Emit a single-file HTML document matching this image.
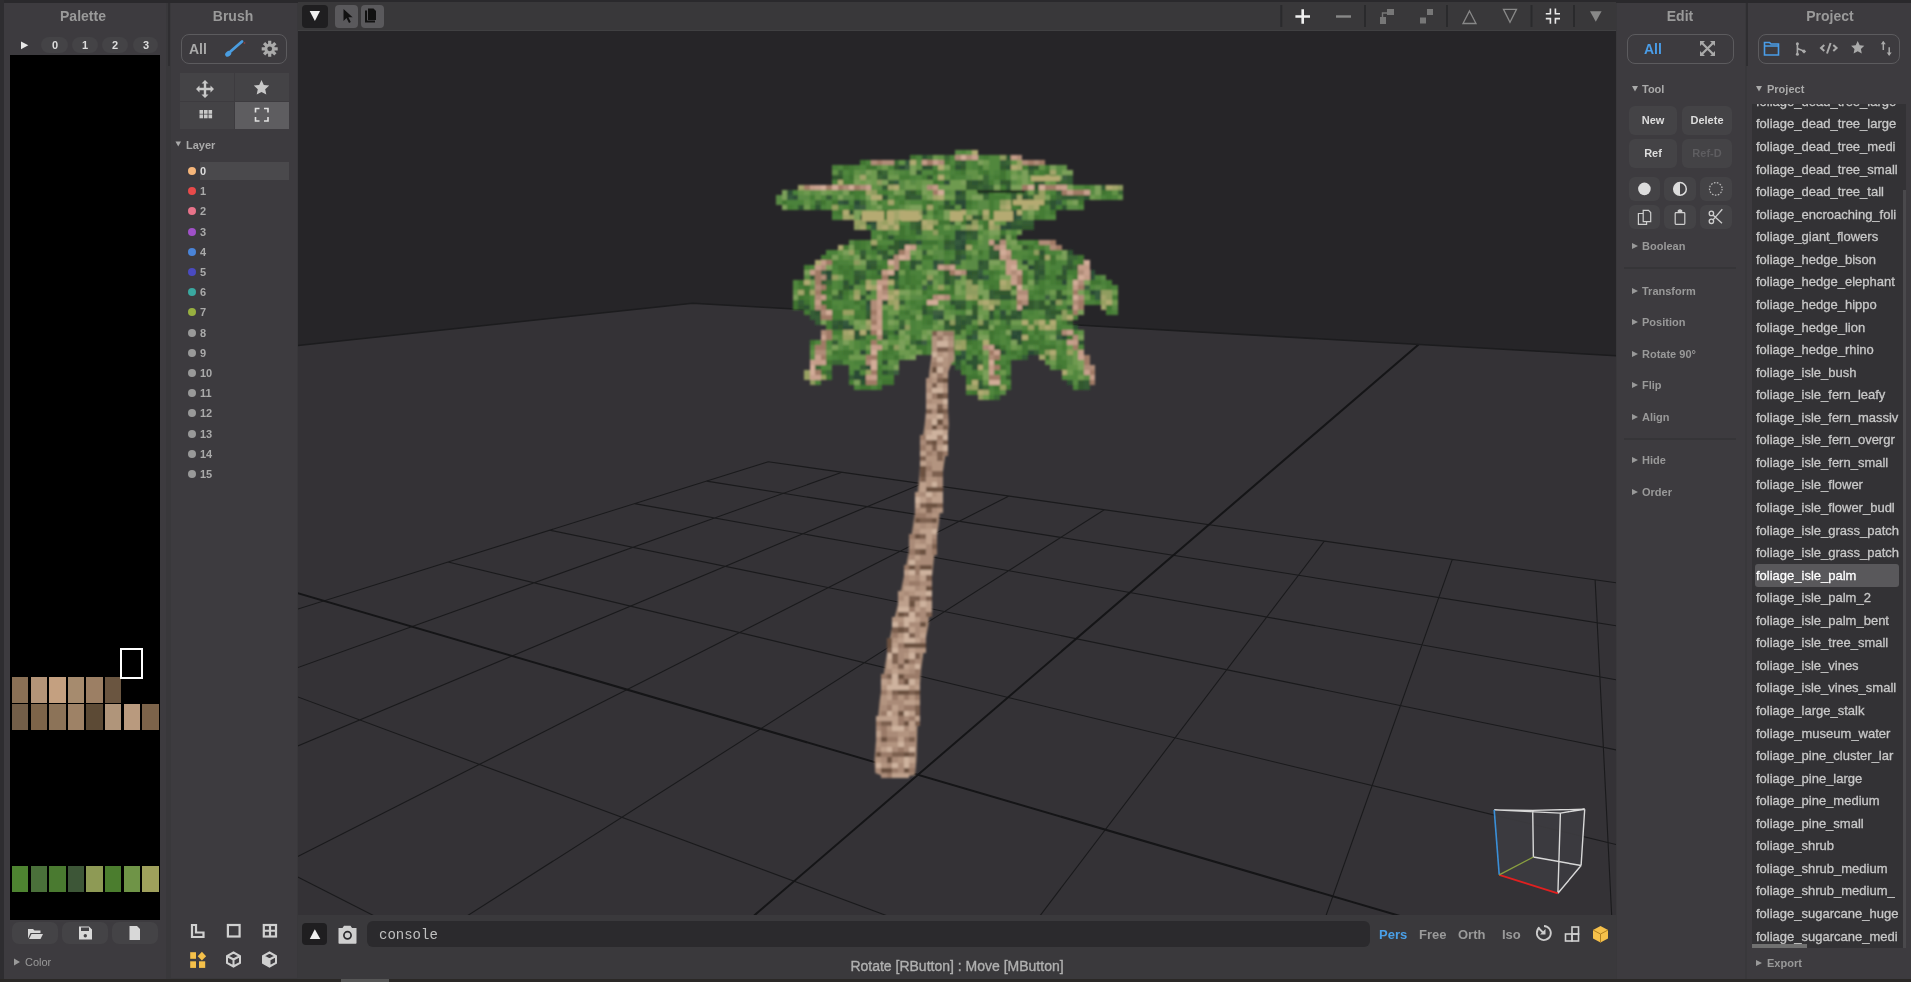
<!DOCTYPE html><html><head><meta charset="utf-8"><style>
html,body{margin:0;padding:0;}
body{width:1911px;height:982px;overflow:hidden;position:relative;background:#39383b;font-family:"Liberation Sans", sans-serif;}
.b{position:absolute;}
.t{position:absolute;white-space:nowrap;-webkit-font-smoothing:antialiased;will-change:transform;}
svg{position:absolute;}
</style></head><body>
<div class="b" style="left:4px;top:3px;width:162px;height:976px;background:#3d3b3f;"></div><div class="b" style="left:171px;top:3px;width:126px;height:975px;background:#3d3b3f;"></div><div class="b" style="left:1617px;top:3px;width:128px;height:976px;background:#3d3b3f;"></div><div class="b" style="left:1747px;top:3px;width:164px;height:976px;background:#3d3b3f;"></div><div class="b" style="left:0px;top:0px;width:1911px;height:3px;background:#2a292c;"></div><div class="b" style="left:0px;top:0px;width:4px;height:982px;background:#2e2d30;"></div><div class="b" style="left:0px;top:979px;width:1911px;height:3px;background:#2a2826;"></div><div class="b" style="left:167.5px;top:3px;width:2.5px;height:63px;background:#2f2e31;"></div><div class="b" style="left:1745.5px;top:3px;width:2.0px;height:63px;background:#2f2e31;"></div><div class="b" style="left:298px;top:2px;width:1318px;height:28px;background:#39383a;"></div><div class="b" style="left:298px;top:30px;width:1318px;height:1px;background:#404042;"></div><div class="b" style="left:298px;top:915px;width:1318px;height:64px;background:#3a393c;"></div><div class="t" style="left:-67px;width:300px;text-align:center;top:2px;height:28px;line-height:28px;font-size:14px;color:#9a9a9a;font-weight:bold;">Palette</div><div class="t" style="left:83px;width:300px;text-align:center;top:2px;height:28px;line-height:28px;font-size:14px;color:#9a9a9a;font-weight:bold;">Brush</div><div class="t" style="left:1530px;width:300px;text-align:center;top:2px;height:28px;line-height:28px;font-size:14px;color:#9a9a9a;font-weight:bold;">Edit</div><div class="t" style="left:1680px;width:300px;text-align:center;top:2px;height:28px;line-height:28px;font-size:14px;color:#9a9a9a;font-weight:bold;">Project</div><svg style="left:0;top:0" width="170" height="60"><polygon points="21,41.4 28.3,45.3 21,49.2" fill="#e8e8e8"/></svg><div class="b" style="left:41.4px;top:37px;width:26.199999999999996px;height:15.5px;background:#444346;border-radius:8px;"></div><div class="t" style="left:-95.5px;width:300px;text-align:center;top:34px;height:22px;line-height:22px;font-size:11px;color:#dddddd;font-weight:bold;">0</div><div class="b" style="left:72px;top:37px;width:25.900000000000006px;height:15.5px;background:#444346;border-radius:8px;"></div><div class="t" style="left:-65.05px;width:300px;text-align:center;top:34px;height:22px;line-height:22px;font-size:11px;color:#dddddd;font-weight:bold;">1</div><div class="b" style="left:102.3px;top:37px;width:25.700000000000003px;height:15.5px;background:#444346;border-radius:8px;"></div><div class="t" style="left:-34.849999999999994px;width:300px;text-align:center;top:34px;height:22px;line-height:22px;font-size:11px;color:#dddddd;font-weight:bold;">2</div><div class="b" style="left:132.6px;top:37px;width:25.80000000000001px;height:15.5px;background:#444346;border-radius:8px;"></div><div class="t" style="left:-4.5px;width:300px;text-align:center;top:34px;height:22px;line-height:22px;font-size:11px;color:#dddddd;font-weight:bold;">3</div><div class="b" style="left:10px;top:55px;width:150px;height:865px;background:#000;"></div><div class="b" style="left:12.0px;top:677.2px;width:16.4px;height:25.59999999999991px;background:#8a7055;"></div><div class="b" style="left:30.6px;top:677.2px;width:16.4px;height:25.59999999999991px;background:#b39478;"></div><div class="b" style="left:49.2px;top:677.2px;width:16.39999999999999px;height:25.59999999999991px;background:#c4a080;"></div><div class="b" style="left:67.8px;top:677.2px;width:16.400000000000006px;height:25.59999999999991px;background:#a68b6e;"></div><div class="b" style="left:86.4px;top:677.2px;width:16.39999999999999px;height:25.59999999999991px;background:#9c7f64;"></div><div class="b" style="left:105.0px;top:677.2px;width:16.400000000000006px;height:25.59999999999991px;background:#6a5540;"></div><div class="b" style="left:12.0px;top:704.2px;width:16.4px;height:25.59999999999991px;background:#735e48;"></div><div class="b" style="left:30.6px;top:704.2px;width:16.4px;height:25.59999999999991px;background:#7d6449;"></div><div class="b" style="left:49.2px;top:704.2px;width:16.39999999999999px;height:25.59999999999991px;background:#8c7358;"></div><div class="b" style="left:67.8px;top:704.2px;width:16.400000000000006px;height:25.59999999999991px;background:#9e8266;"></div><div class="b" style="left:86.4px;top:704.2px;width:16.39999999999999px;height:25.59999999999991px;background:#5c4a35;"></div><div class="b" style="left:105.0px;top:704.2px;width:16.400000000000006px;height:25.59999999999991px;background:#b0957a;"></div><div class="b" style="left:123.6px;top:704.2px;width:16.400000000000006px;height:25.59999999999991px;background:#b99a7e;"></div><div class="b" style="left:142.2px;top:704.2px;width:16.400000000000006px;height:25.59999999999991px;background:#7c634a;"></div><div class="b" style="left:12.0px;top:866.4px;width:16.4px;height:25.600000000000023px;background:#4e8431;"></div><div class="b" style="left:30.6px;top:866.4px;width:16.4px;height:25.600000000000023px;background:#4a703a;"></div><div class="b" style="left:49.2px;top:866.4px;width:16.39999999999999px;height:25.600000000000023px;background:#4a7a30;"></div><div class="b" style="left:67.8px;top:866.4px;width:16.400000000000006px;height:25.600000000000023px;background:#3d5637;"></div><div class="b" style="left:86.4px;top:866.4px;width:16.39999999999999px;height:25.600000000000023px;background:#8e9a55;"></div><div class="b" style="left:105.0px;top:866.4px;width:16.400000000000006px;height:25.600000000000023px;background:#4b7d2e;"></div><div class="b" style="left:123.6px;top:866.4px;width:16.400000000000006px;height:25.600000000000023px;background:#6f9447;"></div><div class="b" style="left:142.2px;top:866.4px;width:16.400000000000006px;height:25.600000000000023px;background:#9fa05c;"></div><div class="b" style="left:120px;top:647.5px;width:22.5px;height:31.0px;background:transparent;border:2.5px solid #fff;box-sizing:border-box;"></div><div class="b" style="left:12px;top:922px;width:46px;height:21.5px;background:#444346;border-radius:7px;"></div><div class="b" style="left:62px;top:922px;width:46px;height:21.5px;background:#444346;border-radius:7px;"></div><div class="b" style="left:112px;top:922px;width:45.5px;height:21.5px;background:#444346;border-radius:7px;"></div><svg style="left:0;top:900px" width="170" height="60">
<path d="M28,29 h5 l1.5,1.5 h6 v2.5 h-10 l-2.5,5.5 z" fill="#d8d8d8"/><path d="M29,39 l2.5,-5 h11.5 l-2.5,5 z" fill="#d8d8d8"/>
<path d="M79,26.5 h10 l3,3 v10 h-13 z M81,27.5 v3.5 h8 v-3.5 z" fill="#d8d8d8" fill-rule="evenodd"/><circle cx="85.3" cy="35.8" r="1.7" fill="#444346"/>
<path d="M129.5,26 h7.5 l3,3 v11 h-10.5 z" fill="#d8d8d8"/>
</svg><svg style="left:0;top:940px" width="60" height="40"><polygon points="14,18.5 20,22 14,25.5" fill="#999"/></svg><div class="t" style="left:25px;top:951px;height:22px;line-height:22px;font-size:11px;color:#999;font-weight:normal;">Color</div><div class="b" style="left:180.5px;top:34px;width:106.5px;height:29.5px;background:transparent;border:1px solid #5c5b5e;border-radius:8px;box-sizing:border-box;"></div><div class="t" style="left:189px;top:34.5px;height:28px;line-height:28px;font-size:14px;color:#aaaaaa;font-weight:bold;">All</div><svg style="left:170px;top:30px" width="130" height="40">
<path d="M60.5,21.5 L72,11.5" stroke="#4a9de0" stroke-width="2.8" stroke-linecap="round"/><ellipse cx="58.2" cy="23.8" rx="3.3" ry="2.5" transform="rotate(-40 58.2 23.8)" fill="#4a9de0"/><circle cx="74.5" cy="13" r="0.9" fill="#8a4040"/>
<g transform="translate(99.7,18.8)" fill="#aaa"><circle r="5.2"/><path d="M-1.6,-8 h3.2 v16 h-3.2z M-8,-1.6 v3.2 h16 v-3.2z" /><path d="M-1.6,-8 h3.2 v16 h-3.2z" transform="rotate(45)"/><path d="M-1.6,-8 h3.2 v16 h-3.2z" transform="rotate(-45)"/><circle r="2.4" fill="#3c3b3e"/></g>
</svg><div class="b" style="left:179.7px;top:73px;width:54.5px;height:27.700000000000003px;background:#444346;"></div><div class="b" style="left:235px;top:73px;width:53.80000000000001px;height:27.700000000000003px;background:#444346;"></div><div class="b" style="left:179.7px;top:101.5px;width:54.5px;height:27.69999999999999px;background:#444346;"></div><div class="b" style="left:235px;top:101.5px;width:53.80000000000001px;height:27.69999999999999px;background:#5e5d60;"></div><svg style="left:170px;top:70px" width="130" height="62">
<g fill="#c8c8c8"><path d="M35,10 l3.5,3.5 h-2.3 v4.3 h4.3 v-2.3 l3.5,3.5 l-3.5,3.5 v-2.3 h-4.3 v4.3 h2.3 l-3.5,3.5 l-3.5,-3.5 h2.3 v-4.3 h-4.3 v2.3 l-3.5,-3.5 l3.5,-3.5 v2.3 h4.3 v-4.3 h-2.3 z"/></g>
<path d="M91.5,10 l2.3,5 5.4,0.6 -4,3.7 1.1,5.3 -4.8,-2.7 -4.8,2.7 1.1,-5.3 -4,-3.7 5.4,-0.6z" fill="#c8c8c8"/>
<g fill="#c8c8c8"><rect x="29.5" y="40" width="3.6" height="3.8"/><rect x="34" y="40" width="3.6" height="3.8"/><rect x="38.5" y="40" width="3.6" height="3.8"/><rect x="29.5" y="44.5" width="3.6" height="3.8"/><rect x="34" y="44.5" width="3.6" height="3.8"/><rect x="38.5" y="44.5" width="3.6" height="3.8"/></g>
<path d="M85.5,42.5 v-4 h4 M94,38.5 h4 v4 M98,47 v4 h-4 M89.5,51 h-4 v-4" stroke="#e0e0e0" stroke-width="1.6" fill="none"/>
</svg><svg style="left:170px;top:135px" width="30" height="20"><polygon points="5.5,6.5 11,6.5 8.25,11.5" fill="#aaa"/></svg><div class="t" style="left:186px;top:134px;height:22px;line-height:22px;font-size:11px;color:#aaaaaa;font-weight:bold;">Layer</div><div class="b" style="left:200px;top:162px;width:88.80000000000001px;height:17.69999999999999px;background:#4a494c;"></div><div class="b" style="left:187.8px;top:167.0px;width:8px;height:8px;border-radius:50%;background:#f5b57a"></div><div class="t" style="left:200px;top:160.0px;height:22px;line-height:22px;font-size:11px;color:#dddddd;font-weight:bold;">0</div><div class="b" style="left:187.8px;top:187.2px;width:8px;height:8px;border-radius:50%;background:#e84a4a"></div><div class="t" style="left:200px;top:180.2px;height:22px;line-height:22px;font-size:11px;color:#aaaaaa;font-weight:bold;">1</div><div class="b" style="left:187.8px;top:207.4px;width:8px;height:8px;border-radius:50%;background:#e8738a"></div><div class="t" style="left:200px;top:200.4px;height:22px;line-height:22px;font-size:11px;color:#aaaaaa;font-weight:bold;">2</div><div class="b" style="left:187.8px;top:227.6px;width:8px;height:8px;border-radius:50%;background:#a050c8"></div><div class="t" style="left:200px;top:220.6px;height:22px;line-height:22px;font-size:11px;color:#aaaaaa;font-weight:bold;">3</div><div class="b" style="left:187.8px;top:247.8px;width:8px;height:8px;border-radius:50%;background:#4a84d8"></div><div class="t" style="left:200px;top:240.8px;height:22px;line-height:22px;font-size:11px;color:#aaaaaa;font-weight:bold;">4</div><div class="b" style="left:187.8px;top:268.0px;width:8px;height:8px;border-radius:50%;background:#4a4ac0"></div><div class="t" style="left:200px;top:261.0px;height:22px;line-height:22px;font-size:11px;color:#aaaaaa;font-weight:bold;">5</div><div class="b" style="left:187.8px;top:288.2px;width:8px;height:8px;border-radius:50%;background:#3aa8a0"></div><div class="t" style="left:200px;top:281.2px;height:22px;line-height:22px;font-size:11px;color:#aaaaaa;font-weight:bold;">6</div><div class="b" style="left:187.8px;top:308.4px;width:8px;height:8px;border-radius:50%;background:#98b040"></div><div class="t" style="left:200px;top:301.4px;height:22px;line-height:22px;font-size:11px;color:#aaaaaa;font-weight:bold;">7</div><div class="b" style="left:187.8px;top:328.6px;width:8px;height:8px;border-radius:50%;background:#999999"></div><div class="t" style="left:200px;top:321.6px;height:22px;line-height:22px;font-size:11px;color:#aaaaaa;font-weight:bold;">8</div><div class="b" style="left:187.8px;top:348.8px;width:8px;height:8px;border-radius:50%;background:#999999"></div><div class="t" style="left:200px;top:341.79999999999995px;height:22px;line-height:22px;font-size:11px;color:#aaaaaa;font-weight:bold;">9</div><div class="b" style="left:187.8px;top:369.0px;width:8px;height:8px;border-radius:50%;background:#999999"></div><div class="t" style="left:200px;top:362.0px;height:22px;line-height:22px;font-size:11px;color:#aaaaaa;font-weight:bold;">10</div><div class="b" style="left:187.8px;top:389.2px;width:8px;height:8px;border-radius:50%;background:#999999"></div><div class="t" style="left:200px;top:382.2px;height:22px;line-height:22px;font-size:11px;color:#aaaaaa;font-weight:bold;">11</div><div class="b" style="left:187.8px;top:409.4px;width:8px;height:8px;border-radius:50%;background:#999999"></div><div class="t" style="left:200px;top:402.4px;height:22px;line-height:22px;font-size:11px;color:#aaaaaa;font-weight:bold;">12</div><div class="b" style="left:187.8px;top:429.6px;width:8px;height:8px;border-radius:50%;background:#999999"></div><div class="t" style="left:200px;top:422.59999999999997px;height:22px;line-height:22px;font-size:11px;color:#aaaaaa;font-weight:bold;">13</div><div class="b" style="left:187.8px;top:449.8px;width:8px;height:8px;border-radius:50%;background:#999999"></div><div class="t" style="left:200px;top:442.8px;height:22px;line-height:22px;font-size:11px;color:#aaaaaa;font-weight:bold;">14</div><div class="b" style="left:187.8px;top:470.0px;width:8px;height:8px;border-radius:50%;background:#999999"></div><div class="t" style="left:200px;top:463.0px;height:22px;line-height:22px;font-size:11px;color:#aaaaaa;font-weight:bold;">15</div><svg style="left:170px;top:910px" width="130" height="70">
<g fill="none" stroke="#d0d0d0" stroke-width="2.2">
<path d="M22,15 h4 v7.5 h7.5 v4.5 h-11.5 z" stroke-linejoin="miter"/>
<rect x="57.9" y="15" width="11.7" height="11.5"/>
<rect x="93.8" y="15" width="12.2" height="11.5"/><path d="M100,15 v11.5 M93.8,20.75 h12.2"/>
</g>
<g fill="#f5c04a"><rect x="20.2" y="42.2" width="5.8" height="6.6"/><rect x="20.2" y="51.3" width="5.8" height="6.6"/><rect x="29" y="51.3" width="6.2" height="6.6"/><path d="M31.9,41.8 l4.2,4.4 -4.2,4.4 -4.2,-4.4z"/></g>
<g fill="none" stroke="#d0d0d0" stroke-width="2"><path d="M63.5,42.5 l6.5,3.5 v7 l-6.5,3.5 -6.5,-3.5 v-7 z M57,46 l6.5,3.5 6.5,-3.5 M63.5,49.5 v7.5"/></g>
<path d="M93,46 l6.5,3.5 v7.5 l-6.5,-3.5z" fill="#d0d0d0"/><g fill="none" stroke="#d0d0d0" stroke-width="2"><path d="M99.5,42.5 l6.5,3.5 v7 l-6.5,3.5 -6.5,-3.5 v-7 z M93,46 l6.5,3.5 6.5,-3.5 M99.5,49.5 v7.5"/></g>
</svg><div class="b" style="left:302.4px;top:5.2px;width:25.30000000000001px;height:22.6px;background:#1f1e20;border-radius:4px;"></div><svg style="left:290px;top:0" width="110" height="32"><polygon points="19.7,11 30,11 24.9,21" fill="#f0f0f0"/></svg><div class="b" style="left:335px;top:5.4px;width:23.19999999999999px;height:22.5px;background:#5a595c;border-radius:4px;"></div><div class="b" style="left:360.8px;top:5.4px;width:23.0px;height:22.5px;background:#5a595c;border-radius:4px;"></div><svg style="left:330px;top:0" width="60" height="32">
<path d="M13.5,9 v12 l3,-3 l2.5,5 l1.8,-0.9 l-2.4,-4.8 h4.2 z" fill="#111"/>
<path d="M35,10.5 h2 v10 h8 v2 h-10z" fill="#111"/><path d="M38,8.5 h5.5 l2.5,2.5 v9 h-8z" fill="#111"/>
</svg><svg style="left:1270px;top:0" width="350" height="32">
<g fill="#3c3c3e"></g>
<g stroke="#2a2a2c" stroke-width="2"><path d="M11.3,5 v22 M95,5 v22 M177,5 v22 M261.5,5 v22 M304,5 v22"/></g>
<path d="M25.4,16.5 h14.6 M32.7,9.2 v14.6" stroke="#f0f0f0" stroke-width="2.6"/>
<path d="M66,16.5 h15" stroke="#888" stroke-width="2.4"/>
<g fill="#777"><rect x="110" y="17" width="6" height="7"/><rect x="117" y="9" width="7" height="6"/><path d="M112.5,17 v-4 h4.5" stroke="#777" fill="none" stroke-width="1.4"/>
<rect x="150" y="17.5" width="6" height="6"/><rect x="157" y="9" width="6" height="6"/></g>
<path d="M199.5,11 l6.5,12.5 h-13 z" stroke="#888" stroke-width="1.3" fill="none"/>
<path d="M233.5,9.3 h13 l-6.5,13 z" stroke="#888" stroke-width="1.3" fill="none"/>
<g stroke="#e8e8e8" stroke-width="1.6" fill="none"><path d="M275.8,13.8 h4.6 v-5.2 M290,13.8 h-4.6 v-5.2 M275.8,18.6 h4.6 v5.2 M290,18.6 h-4.6 v5.2"/></g>
<polygon points="320,11.3 331.6,11.3 325.8,21.7" fill="#888"/>
</svg><div class="b" style="left:302px;top:922.7px;width:25.399999999999977px;height:22.699999999999932px;background:#1f1e20;border-radius:4px;"></div><svg style="left:290px;top:915px" width="80" height="40"><polygon points="24.8,14.2 30.3,24.1 19.8,24.1" fill="#f0f0f0"/><path d="M48.5,13 h4 l1.5,-2.2 h6.5 l1.5,2.2 h4.5 v15 q0,0.8 -0.8,0.8 h-16.4 q-0.8,0 -0.8,-0.8 z" fill="#cfcfcf"/><circle cx="57.5" cy="20.3" r="3.6" fill="none" stroke="#2a292c" stroke-width="1.7"/></svg><div class="b" style="left:367.4px;top:921.4px;width:1002.6px;height:26.100000000000023px;background:#2b2a2d;border-radius:6px;"></div><div class="t" style="left:378.5px;top:921px;height:28px;line-height:28px;font-size:14px;color:#c0c0c0;font-weight:normal;font-family:'Liberation Mono',monospace;">console</div><div class="t" style="left:1379.4px;top:921.5px;height:26px;line-height:26px;font-size:13px;color:#4aa0e8;font-weight:bold;">Pers</div><div class="t" style="left:1419px;top:921.5px;height:26px;line-height:26px;font-size:13px;color:#9a9a9a;font-weight:bold;">Free</div><div class="t" style="left:1457.5px;top:921.5px;height:26px;line-height:26px;font-size:13px;color:#9a9a9a;font-weight:bold;">Orth</div><div class="t" style="left:1502.4px;top:921.5px;height:26px;line-height:26px;font-size:13px;color:#9a9a9a;font-weight:bold;">Iso</div><svg style="left:1530px;top:915px" width="90" height="40">
<path d="M9.5,12.5 A7,7 0 1 0 14,11" stroke="#ccc" stroke-width="1.8" fill="none"/><path d="M8,12.5 l6,6" stroke="#ccc" stroke-width="1.8"/><path d="M15.5,14 v5.5 h-5.5z" fill="#ccc"/>
<g stroke="#d0d0d0" stroke-width="1.6" fill="none"><rect x="35.5" y="19" width="6.5" height="7"/><rect x="42" y="19" width="6.5" height="7"/><rect x="42" y="12" width="6.5" height="7"/></g>
<path d="M70.5,11 l7.5,4 v8.5 l-7.5,4 -7.5,-4 v-8.5z" fill="#f5c04a"/><path d="M63,15 l7.5,4 7.5,-4 M70.5,19 v8.5" stroke="#b08020" stroke-width="1" fill="none"/>
</svg><div class="t" style="left:807.1px;width:300px;text-align:center;top:951.5px;height:28px;line-height:28px;font-size:14px;color:#b0b0b0;font-weight:normal;-webkit-text-stroke:0.35px;">Rotate [RButton] : Move [MButton]</div><div class="b" style="left:340.7px;top:979px;width:48.0px;height:3px;background:#555;"></div><div class="b" style="left:1626.5px;top:33.5px;width:107.70000000000005px;height:30.299999999999997px;background:transparent;border:1px solid #5c5b5e;border-radius:8px;box-sizing:border-box;"></div><div class="t" style="left:1644.4px;top:34.8px;height:28px;line-height:28px;font-size:14px;color:#4a9de8;font-weight:bold;">All</div><svg style="left:1690px;top:30px" width="40" height="40">
<g stroke="#aaa" stroke-width="2.2" fill="none"><path d="M12,13 L23,24 M23,13 L12,24"/></g>
<g fill="#aaa"><path d="M10,11 h5 l-5,5z M25,11 v5 l-5,-5z M10,26 v-5 l5,5z M25,26 h-5 l5,-5z"/></g>
</svg><div class="b" style="left:1757.6px;top:33.5px;width:142.9000000000001px;height:30.299999999999997px;background:transparent;border:1px solid #5c5b5e;border-radius:8px;box-sizing:border-box;"></div><svg style="left:1750px;top:30px" width="160" height="40">
<path d="M14.5,12.5 h5 l1.5,1.5 h7.5 v11 h-14 z M14.5,16 h14" stroke="#4a9de8" stroke-width="1.6" fill="none"/>
<g stroke="#aaa" stroke-width="1.6" fill="none"><path d="M47.4,13.5 v11 M47.4,17.5 c0,2.5 5,2 6.5,4"/></g><g fill="#aaa"><circle cx="47.4" cy="13.8" r="1.5"/><circle cx="47.4" cy="24.2" r="1.5"/><path d="M54,19.2 l2.2,2.2 -2.2,2.2 -2.2,-2.2z"/></g>
<g stroke="#aaa" stroke-width="2" fill="none"><path d="M74.3,15 l-3.3,3 3.3,3 M83.3,15 l3.3,3 -3.3,3 M80.6,13 l-3.6,10.5"/></g>
<path d="M107.7,11 l2,4.3 4.6,0.5 -3.4,3.2 0.9,4.5 -4.1,-2.3 -4.1,2.3 0.9,-4.5 -3.4,-3.2 4.6,-0.5z" fill="#aaa"/>
<g stroke="#aaa" stroke-width="1.5" fill="none"><path d="M133.3,20 v-8.4"/><path d="M139.2,17.3 v8"/></g><g fill="#aaa"><path d="M130.8,14.2 l2.5,-3.2 2.5,3.2z M136.7,22.6 h5 l-2.5,3.2z"/></g>
</svg><svg style="left:1631px;top:82.5px" width="10" height="12"><polygon points="1,3 7,3 4,8.5" fill="#aaa"/></svg><div class="t" style="left:1642.4px;top:77.5px;height:22px;line-height:22px;font-size:11px;color:#aaaaaa;font-weight:bold;">Tool</div><div class="b" style="left:1628.7px;top:105.8px;width:48.59999999999991px;height:28.89999999999999px;background:#444346;border-radius:6px;"></div><div class="t" style="left:1503.0px;width:300px;text-align:center;top:109.25px;height:22px;line-height:22px;font-size:11px;color:#dddddd;font-weight:bold;">New</div><div class="b" style="left:1682px;top:105.8px;width:49.5px;height:28.89999999999999px;background:#444346;border-radius:6px;"></div><div class="t" style="left:1556.75px;width:300px;text-align:center;top:109.25px;height:22px;line-height:22px;font-size:11px;color:#dddddd;font-weight:bold;">Delete</div><div class="b" style="left:1628.7px;top:138.8px;width:48.59999999999991px;height:28.899999999999977px;background:#444346;border-radius:6px;"></div><div class="t" style="left:1503.0px;width:300px;text-align:center;top:142.25px;height:22px;line-height:22px;font-size:11px;color:#dddddd;font-weight:bold;">Ref</div><div class="b" style="left:1682px;top:138.8px;width:49.5px;height:28.899999999999977px;background:#444346;border-radius:6px;"></div><div class="t" style="left:1556.75px;width:300px;text-align:center;top:142.25px;height:22px;line-height:22px;font-size:11px;color:#5e5d60;font-weight:bold;">Ref-D</div><div class="b" style="left:1628.7px;top:177.3px;width:31.299999999999955px;height:23.399999999999977px;background:#444346;border-radius:6px;"></div><div class="b" style="left:1664px;top:177.3px;width:31.799999999999955px;height:23.399999999999977px;background:#444346;border-radius:6px;"></div><div class="b" style="left:1700px;top:177.3px;width:31.5px;height:23.399999999999977px;background:#444346;border-radius:6px;"></div><div class="b" style="left:1628.7px;top:204.8px;width:31.299999999999955px;height:23.899999999999977px;background:#444346;border-radius:6px;"></div><div class="b" style="left:1664px;top:204.8px;width:31.799999999999955px;height:23.899999999999977px;background:#444346;border-radius:6px;"></div><div class="b" style="left:1700px;top:204.8px;width:31.5px;height:23.899999999999977px;background:#444346;border-radius:6px;"></div><svg style="left:1620px;top:170px" width="120" height="65">
<circle cx="24.4" cy="18.9" r="6.3" fill="#dcdcdc"/>
<circle cx="60" cy="18.9" r="6.3" fill="none" stroke="#dcdcdc" stroke-width="1.5"/><path d="M60,12.6 a6.3,6.3 0 0 0 0,12.6z" fill="#dcdcdc"/>
<circle cx="95.8" cy="18.9" r="6.3" fill="none" stroke="#bbb" stroke-width="1.2" stroke-dasharray="1.6,1.4"/>
<g stroke="#cfcfcf" stroke-width="1.2" fill="none"><path d="M23.2,43.5 h-4.8 v10.8 h8.2 v-2.5"/><path d="M23.2,40.3 h5.3 l2.2,2.2 v9.2 h-7.5z"/></g>
<g stroke="#cfcfcf" stroke-width="1.2" fill="none"><rect x="55.2" y="42.6" width="9.6" height="11.7" rx="0.8"/><path d="M58.3,42.2 v-1.5 q1.7,-1.6 3.4,0 v1.5z" fill="#cfcfcf"/></g>
<g stroke="#cfcfcf" stroke-width="1.3" fill="none"><circle cx="91.4" cy="43.4" r="2.2"/><circle cx="91.4" cy="51.3" r="2.2"/><path d="M93.2,45.2 L102,53.2 M93.2,49.6 L102.3,39.3"/></g>
</svg><svg style="left:1631px;top:240.2px" width="10" height="12"><polygon points="1,3 7,6 1,9" fill="#999"/></svg><div class="t" style="left:1642.4px;top:235.2px;height:22px;line-height:22px;font-size:11px;color:#999999;font-weight:bold;">Boolean</div><svg style="left:1631px;top:284.6px" width="10" height="12"><polygon points="1,3 7,6 1,9" fill="#999"/></svg><div class="t" style="left:1642.4px;top:279.6px;height:22px;line-height:22px;font-size:11px;color:#999999;font-weight:bold;">Transform</div><svg style="left:1631px;top:316.2px" width="10" height="12"><polygon points="1,3 7,6 1,9" fill="#999"/></svg><div class="t" style="left:1642.4px;top:311.2px;height:22px;line-height:22px;font-size:11px;color:#999999;font-weight:bold;">Position</div><svg style="left:1631px;top:347.5px" width="10" height="12"><polygon points="1,3 7,6 1,9" fill="#999"/></svg><div class="t" style="left:1642.4px;top:342.5px;height:22px;line-height:22px;font-size:11px;color:#999999;font-weight:bold;">Rotate 90°</div><svg style="left:1631px;top:379px" width="10" height="12"><polygon points="1,3 7,6 1,9" fill="#999"/></svg><div class="t" style="left:1642.4px;top:374px;height:22px;line-height:22px;font-size:11px;color:#999999;font-weight:bold;">Flip</div><svg style="left:1631px;top:410.7px" width="10" height="12"><polygon points="1,3 7,6 1,9" fill="#999"/></svg><div class="t" style="left:1642.4px;top:405.7px;height:22px;line-height:22px;font-size:11px;color:#999999;font-weight:bold;">Align</div><svg style="left:1631px;top:454.4px" width="10" height="12"><polygon points="1,3 7,6 1,9" fill="#999"/></svg><div class="t" style="left:1642.4px;top:449.4px;height:22px;line-height:22px;font-size:11px;color:#999999;font-weight:bold;">Hide</div><svg style="left:1631px;top:486px" width="10" height="12"><polygon points="1,3 7,6 1,9" fill="#999"/></svg><div class="t" style="left:1642.4px;top:481px;height:22px;line-height:22px;font-size:11px;color:#999999;font-weight:bold;">Order</div><div class="b" style="left:1624px;top:267px;width:112.40000000000009px;height:2px;background:#363538;"></div><div class="b" style="left:1624px;top:437.5px;width:112.40000000000009px;height:2.0px;background:#363538;"></div><svg style="left:1755px;top:82.5px" width="10" height="12"><polygon points="1,3 7,3 4,8.5" fill="#aaa"/></svg><div class="t" style="left:1766.7px;top:77.5px;height:22px;line-height:22px;font-size:11px;color:#aaaaaa;font-weight:bold;">Project</div><div class="b" style="left:1751.6px;top:103.8px;width:154.70000000000005px;height:844.2px;background:#333235;"></div><div class="b" style="left:1751.6px;top:103.8px;width:147px;height:844px;overflow:hidden"><div class="t" style="left:4.100000000000136px;top:-14.855999999999995px;height:26px;line-height:26px;font-size:13px;color:#c8c8c8;font-weight:normal;-webkit-text-stroke:0.3px;">foliage_dead_tree_large</div><div class="t" style="left:4.100000000000136px;top:7.700000000000003px;height:26px;line-height:26px;font-size:13px;color:#c8c8c8;font-weight:normal;-webkit-text-stroke:0.3px;">foliage_dead_tree_large</div><div class="t" style="left:4.100000000000136px;top:30.256000000000014px;height:26px;line-height:26px;font-size:13px;color:#c8c8c8;font-weight:normal;-webkit-text-stroke:0.3px;">foliage_dead_tree_medi</div><div class="t" style="left:4.100000000000136px;top:52.812px;height:26px;line-height:26px;font-size:13px;color:#c8c8c8;font-weight:normal;-webkit-text-stroke:0.3px;">foliage_dead_tree_small</div><div class="t" style="left:4.100000000000136px;top:75.36800000000001px;height:26px;line-height:26px;font-size:13px;color:#c8c8c8;font-weight:normal;-webkit-text-stroke:0.3px;">foliage_dead_tree_tall</div><div class="t" style="left:4.100000000000136px;top:97.92399999999999px;height:26px;line-height:26px;font-size:13px;color:#c8c8c8;font-weight:normal;-webkit-text-stroke:0.3px;">foliage_encroaching_foli</div><div class="t" style="left:4.100000000000136px;top:120.48000000000002px;height:26px;line-height:26px;font-size:13px;color:#c8c8c8;font-weight:normal;-webkit-text-stroke:0.3px;">foliage_giant_flowers</div><div class="t" style="left:4.100000000000136px;top:143.036px;height:26px;line-height:26px;font-size:13px;color:#c8c8c8;font-weight:normal;-webkit-text-stroke:0.3px;">foliage_hedge_bison</div><div class="t" style="left:4.100000000000136px;top:165.59199999999998px;height:26px;line-height:26px;font-size:13px;color:#c8c8c8;font-weight:normal;-webkit-text-stroke:0.3px;">foliage_hedge_elephant</div><div class="t" style="left:4.100000000000136px;top:188.14799999999997px;height:26px;line-height:26px;font-size:13px;color:#c8c8c8;font-weight:normal;-webkit-text-stroke:0.3px;">foliage_hedge_hippo</div><div class="t" style="left:4.100000000000136px;top:210.704px;height:26px;line-height:26px;font-size:13px;color:#c8c8c8;font-weight:normal;-webkit-text-stroke:0.3px;">foliage_hedge_lion</div><div class="t" style="left:4.100000000000136px;top:233.26px;height:26px;line-height:26px;font-size:13px;color:#c8c8c8;font-weight:normal;-webkit-text-stroke:0.3px;">foliage_hedge_rhino</div><div class="t" style="left:4.100000000000136px;top:255.81599999999997px;height:26px;line-height:26px;font-size:13px;color:#c8c8c8;font-weight:normal;-webkit-text-stroke:0.3px;">foliage_isle_bush</div><div class="t" style="left:4.100000000000136px;top:278.372px;height:26px;line-height:26px;font-size:13px;color:#c8c8c8;font-weight:normal;-webkit-text-stroke:0.3px;">foliage_isle_fern_leafy</div><div class="t" style="left:4.100000000000136px;top:300.928px;height:26px;line-height:26px;font-size:13px;color:#c8c8c8;font-weight:normal;-webkit-text-stroke:0.3px;">foliage_isle_fern_massiv</div><div class="t" style="left:4.100000000000136px;top:323.484px;height:26px;line-height:26px;font-size:13px;color:#c8c8c8;font-weight:normal;-webkit-text-stroke:0.3px;">foliage_isle_fern_overgr</div><div class="t" style="left:4.100000000000136px;top:346.04px;height:26px;line-height:26px;font-size:13px;color:#c8c8c8;font-weight:normal;-webkit-text-stroke:0.3px;">foliage_isle_fern_small</div><div class="t" style="left:4.100000000000136px;top:368.596px;height:26px;line-height:26px;font-size:13px;color:#c8c8c8;font-weight:normal;-webkit-text-stroke:0.3px;">foliage_isle_flower</div><div class="t" style="left:4.100000000000136px;top:391.152px;height:26px;line-height:26px;font-size:13px;color:#c8c8c8;font-weight:normal;-webkit-text-stroke:0.3px;">foliage_isle_flower_budl</div><div class="t" style="left:4.100000000000136px;top:413.708px;height:26px;line-height:26px;font-size:13px;color:#c8c8c8;font-weight:normal;-webkit-text-stroke:0.3px;">foliage_isle_grass_patch</div><div class="t" style="left:4.100000000000136px;top:436.26400000000007px;height:26px;line-height:26px;font-size:13px;color:#c8c8c8;font-weight:normal;-webkit-text-stroke:0.3px;">foliage_isle_grass_patch</div><div class="b" style="left:3.800000000000182px;top:460.11999999999995px;width:143.29999999999995px;height:23.0px;background:#59585b;border-radius:3px;"></div><div class="t" style="left:4.100000000000136px;top:458.82px;height:26px;line-height:26px;font-size:13px;color:#ffffff;font-weight:normal;-webkit-text-stroke:0.3px;">foliage_isle_palm</div><div class="t" style="left:4.100000000000136px;top:481.37600000000003px;height:26px;line-height:26px;font-size:13px;color:#c8c8c8;font-weight:normal;-webkit-text-stroke:0.3px;">foliage_isle_palm_2</div><div class="t" style="left:4.100000000000136px;top:503.932px;height:26px;line-height:26px;font-size:13px;color:#c8c8c8;font-weight:normal;-webkit-text-stroke:0.3px;">foliage_isle_palm_bent</div><div class="t" style="left:4.100000000000136px;top:526.488px;height:26px;line-height:26px;font-size:13px;color:#c8c8c8;font-weight:normal;-webkit-text-stroke:0.3px;">foliage_isle_tree_small</div><div class="t" style="left:4.100000000000136px;top:549.0440000000001px;height:26px;line-height:26px;font-size:13px;color:#c8c8c8;font-weight:normal;-webkit-text-stroke:0.3px;">foliage_isle_vines</div><div class="t" style="left:4.100000000000136px;top:571.6px;height:26px;line-height:26px;font-size:13px;color:#c8c8c8;font-weight:normal;-webkit-text-stroke:0.3px;">foliage_isle_vines_small</div><div class="t" style="left:4.100000000000136px;top:594.1560000000001px;height:26px;line-height:26px;font-size:13px;color:#c8c8c8;font-weight:normal;-webkit-text-stroke:0.3px;">foliage_large_stalk</div><div class="t" style="left:4.100000000000136px;top:616.7120000000001px;height:26px;line-height:26px;font-size:13px;color:#c8c8c8;font-weight:normal;-webkit-text-stroke:0.3px;">foliage_museum_water</div><div class="t" style="left:4.100000000000136px;top:639.268px;height:26px;line-height:26px;font-size:13px;color:#c8c8c8;font-weight:normal;-webkit-text-stroke:0.3px;">foliage_pine_cluster_lar</div><div class="t" style="left:4.100000000000136px;top:661.8240000000001px;height:26px;line-height:26px;font-size:13px;color:#c8c8c8;font-weight:normal;-webkit-text-stroke:0.3px;">foliage_pine_large</div><div class="t" style="left:4.100000000000136px;top:684.3800000000001px;height:26px;line-height:26px;font-size:13px;color:#c8c8c8;font-weight:normal;-webkit-text-stroke:0.3px;">foliage_pine_medium</div><div class="t" style="left:4.100000000000136px;top:706.936px;height:26px;line-height:26px;font-size:13px;color:#c8c8c8;font-weight:normal;-webkit-text-stroke:0.3px;">foliage_pine_small</div><div class="t" style="left:4.100000000000136px;top:729.4920000000001px;height:26px;line-height:26px;font-size:13px;color:#c8c8c8;font-weight:normal;-webkit-text-stroke:0.3px;">foliage_shrub</div><div class="t" style="left:4.100000000000136px;top:752.0480000000001px;height:26px;line-height:26px;font-size:13px;color:#c8c8c8;font-weight:normal;-webkit-text-stroke:0.3px;">foliage_shrub_medium</div><div class="t" style="left:4.100000000000136px;top:774.604px;height:26px;line-height:26px;font-size:13px;color:#c8c8c8;font-weight:normal;-webkit-text-stroke:0.3px;">foliage_shrub_medium_</div><div class="t" style="left:4.100000000000136px;top:797.1600000000001px;height:26px;line-height:26px;font-size:13px;color:#c8c8c8;font-weight:normal;-webkit-text-stroke:0.3px;">foliage_sugarcane_huge</div><div class="t" style="left:4.100000000000136px;top:819.7160000000001px;height:26px;line-height:26px;font-size:13px;color:#c8c8c8;font-weight:normal;-webkit-text-stroke:0.3px;">foliage_sugarcane_medi</div></div><div class="b" style="left:1902.7px;top:190px;width:3.599999999999909px;height:758px;background:#4a494c;"></div><div class="b" style="left:1751.6px;top:944px;width:55.90000000000009px;height:3.5px;background:#707070;"></div><svg style="left:1755px;top:957px" width="10" height="12"><polygon points="1,3 7,6 1,9" fill="#999"/></svg><div class="t" style="left:1766.6px;top:952px;height:22px;line-height:22px;font-size:11px;color:#999999;font-weight:bold;">Export</div><svg style="left:298px;top:31px" width="1318" height="884" viewBox="298 31 1318 884"><rect x="298" y="31" width="1318" height="884" fill="#262528"/><polygon points="-10163.4,1466.4 692.5,303.2 21782.8,1501.5" fill="#343236"/><path d="M768.3,461.7 L-1203.0,1079.3 M768.3,461.7 L1936.5,628.6 M841.9,472.3 L-1230.9,1216.3 M706.6,481.1 L1984.2,684.3 M921.9,483.7 L-1269.1,1404.4 M634.7,503.6 L2046.5,757.0 M1009.0,496.1 L-926.4,1476.5 M549.8,530.2 L2131.2,856.1 M1104.3,509.7 L-413.2,1477.1 M448.1,562.0 L2253.4,998.7 M1324.3,541.2 L613.1,1478.2 M169.5,649.3 L2406.9,1480.2 M1452.3,559.4 L1126.3,1478.8 M-28.7,711.4 L1484.2,1479.2 M1595.1,579.8 L1639.5,1479.3 M-291.8,793.8 L561.6,1478.2 M1755.4,602.7 L2152.6,1479.9 M-658.1,908.6 L-361.1,1477.1 M1936.5,628.6 L2665.8,1480.5 M-1203.0,1079.3 L-1283.7,1476.1 " stroke="#1a1a1c" stroke-width="1.1" fill="none"/><path d="M1418.6,344.5 L100.0,1477.7 M-321.3,411.8 L3329.6,1481.2 " stroke="#151517" stroke-width="2" fill="none"/><path d="M692.5,303.2 L21782.8,1501.5 M692.5,303.2 L-10163.4,1466.4 " stroke="#1c1c1e" stroke-width="1.5" fill="none"/><defs><filter id="bl" x="-5%" y="-5%" width="110%" height="110%"><feGaussianBlur stdDeviation="0.9"/></filter></defs><g filter="url(#bl)"><path fill="#5a8b44" d="M955 150h6v5h-6zM961 155h5v5h-5zM882 160h6v5h-6zM916 160h6v5h-6zM877 165h5v5h-5zM1056 165h6v5h-6zM860 170h6v5h-6zM894 170h5v5h-5zM938 170h6v5h-6zM1017 170h5v5h-5zM1056 170h6v5h-6zM966 175h6v5h-6zM1028 175h6v5h-6zM899 180h6v5h-6zM910 180h6v5h-6zM994 180h6v5h-6zM1011 180h6v5h-6zM877 185h5v5h-5zM899 185h6v5h-6zM810 190h5v5h-5zM838 190h5v5h-5zM944 190h6v5h-6zM1090 190h5v5h-5zM776 195h6v5h-6zM798 195h6v5h-6zM804 195h6v5h-6zM843 195h6v5h-6zM849 195h5v5h-5zM888 195h6v5h-6zM776 200h6v5h-6zM866 200h5v5h-5zM905 200h5v5h-5zM938 200h6v5h-6zM978 200h5v5h-5zM983 200h6v5h-6zM1017 200h5v5h-5zM866 205h5v5h-5zM899 205h6v5h-6zM978 205h5v5h-5zM983 205h6v5h-6zM1067 205h6v5h-6zM1073 205h5v5h-5zM1000 210h6v5h-6zM1022 210h6v5h-6zM922 215h5v5h-5zM1022 215h6v5h-6zM950 225h5v5h-5zM888 230h6v5h-6zM922 235h5v5h-5zM938 235h6v5h-6zM983 235h6v5h-6zM849 240h5v5h-5zM983 240h6v5h-6zM916 245h6v5h-6zM978 245h5v5h-5zM983 245h6v5h-6zM1006 245h5v5h-5zM1045 245h5v5h-5zM888 250h6v5h-6zM933 250h5v5h-5zM938 250h6v5h-6zM966 250h6v5h-6zM849 255h5v5h-5zM938 255h6v5h-6zM972 255h6v5h-6zM966 260h6v5h-6zM972 260h6v5h-6zM1000 260h6v5h-6zM1028 260h6v5h-6zM966 265h6v5h-6zM972 265h6v5h-6zM1006 270h5v5h-5zM804 275h6v5h-6zM933 275h5v5h-5zM938 275h6v5h-6zM1078 275h6v5h-6zM1101 275h5v5h-5zM938 280h6v5h-6zM810 285h5v5h-5zM860 285h6v5h-6zM882 285h6v5h-6zM961 285h5v5h-5zM1095 285h6v5h-6zM860 290h6v5h-6zM871 290h6v5h-6zM1045 290h5v5h-5zM877 295h5v5h-5zM899 295h6v5h-6zM910 295h6v5h-6zM916 295h6v5h-6zM1050 295h6v5h-6zM1073 295h5v5h-5zM933 300h5v5h-5zM944 300h6v5h-6zM1017 300h5v5h-5zM1062 300h5v5h-5zM1078 300h6v5h-6zM821 305h5v5h-5zM905 305h5v5h-5zM933 305h5v5h-5zM1011 305h6v5h-6zM1112 305h6v5h-6zM910 310h6v5h-6zM950 310h5v5h-5zM1006 310h5v5h-5zM1039 310h6v5h-6zM888 315h6v5h-6zM849 320h5v5h-5zM933 320h5v5h-5zM989 320h5v5h-5zM894 325h5v5h-5zM1011 325h6v5h-6zM1017 325h5v5h-5zM905 330h5v5h-5zM1045 330h5v5h-5zM1050 330h6v5h-6zM961 335h5v5h-5zM838 340h5v5h-5zM933 340h5v5h-5zM1056 340h6v5h-6zM826 345h6v5h-6zM838 345h5v5h-5zM1028 345h6v5h-6zM810 355h5v5h-5zM899 355h6v5h-6zM983 355h6v5h-6zM1067 355h6v5h-6zM1084 355h6v5h-6zM894 360h5v5h-5zM1067 360h6v5h-6zM1084 360h6v5h-6zM888 365h6v5h-6zM983 365h6v5h-6zM1050 365h6v5h-6zM1078 370h6v5h-6zM1084 375h6v5h-6zM1073 380h5v5h-5zM1090 380h5v5h-5zM1000 390h6v5h-6z"/><path fill="#51873e" d="M961 150h5v5h-5zM989 155h5v5h-5zM994 155h6v5h-6zM922 160h5v5h-5zM950 160h5v5h-5zM966 160h6v5h-6zM989 160h5v5h-5zM994 160h6v5h-6zM1039 160h6v5h-6zM838 165h5v5h-5zM860 165h6v5h-6zM966 165h6v5h-6zM989 165h5v5h-5zM994 165h6v5h-6zM843 170h6v5h-6zM899 170h6v5h-6zM922 170h5v5h-5zM927 170h6v5h-6zM944 170h6v5h-6zM989 170h5v5h-5zM1006 170h5v5h-5zM1034 170h5v5h-5zM916 175h6v5h-6zM933 175h5v5h-5zM1006 175h5v5h-5zM1034 175h5v5h-5zM826 185h6v5h-6zM849 185h5v5h-5zM1073 185h5v5h-5zM1078 185h6v5h-6zM1090 185h5v5h-5zM888 190h6v5h-6zM994 190h6v5h-6zM1017 190h5v5h-5zM1045 190h5v5h-5zM821 195h5v5h-5zM832 195h6v5h-6zM860 195h6v5h-6zM1006 195h5v5h-5zM810 200h5v5h-5zM826 200h6v5h-6zM882 200h6v5h-6zM894 200h5v5h-5zM910 200h6v5h-6zM916 200h6v5h-6zM933 200h5v5h-5zM994 200h6v5h-6zM826 205h6v5h-6zM838 205h5v5h-5zM933 205h5v5h-5zM972 205h6v5h-6zM994 205h6v5h-6zM1045 205h5v5h-5zM1078 205h6v5h-6zM1034 210h5v5h-5zM938 215h6v5h-6zM961 215h5v5h-5zM1045 215h5v5h-5zM1050 215h6v5h-6zM899 220h6v5h-6zM905 220h5v5h-5zM955 225h6v5h-6zM978 230h5v5h-5zM1011 230h6v5h-6zM916 235h6v5h-6zM877 240h5v5h-5zM882 240h6v5h-6zM888 240h6v5h-6zM1022 240h6v5h-6zM1028 240h6v5h-6zM1039 240h6v5h-6zM866 245h5v5h-5zM972 245h6v5h-6zM1034 245h5v5h-5zM854 250h6v5h-6zM983 250h6v5h-6zM1017 250h5v5h-5zM1022 250h6v5h-6zM1056 250h6v5h-6zM838 255h5v5h-5zM871 255h6v5h-6zM910 255h6v5h-6zM933 255h5v5h-5zM950 255h5v5h-5zM983 255h6v5h-6zM1006 255h5v5h-5zM1011 255h6v5h-6zM1017 255h5v5h-5zM849 260h5v5h-5zM905 260h5v5h-5zM922 260h5v5h-5zM927 260h6v5h-6zM1045 260h5v5h-5zM1062 260h5v5h-5zM810 265h5v5h-5zM815 265h6v5h-6zM927 265h6v5h-6zM955 265h6v5h-6zM1006 265h5v5h-5zM1045 265h5v5h-5zM832 270h6v5h-6zM950 270h5v5h-5zM1000 270h6v5h-6zM1045 270h5v5h-5zM1056 270h6v5h-6zM994 275h6v5h-6zM1028 275h6v5h-6zM1067 275h6v5h-6zM793 280h5v5h-5zM832 280h6v5h-6zM1045 280h5v5h-5zM793 285h5v5h-5zM832 285h6v5h-6zM905 285h5v5h-5zM916 285h6v5h-6zM983 285h6v5h-6zM1017 285h5v5h-5zM1034 285h5v5h-5zM1078 285h6v5h-6zM1090 285h5v5h-5zM1101 285h5v5h-5zM849 290h5v5h-5zM1084 290h6v5h-6zM810 295h5v5h-5zM826 295h6v5h-6zM922 295h5v5h-5zM933 295h5v5h-5zM938 295h6v5h-6zM950 295h5v5h-5zM1034 295h5v5h-5zM1067 295h6v5h-6zM810 300h5v5h-5zM815 300h6v5h-6zM832 300h6v5h-6zM838 300h5v5h-5zM905 300h5v5h-5zM1000 300h6v5h-6zM1006 300h5v5h-5zM838 305h5v5h-5zM854 305h6v5h-6zM955 310h6v5h-6zM1022 310h6v5h-6zM1034 310h5v5h-5zM1067 310h6v5h-6zM1028 315h6v5h-6zM1034 315h5v5h-5zM882 320h6v5h-6zM916 320h6v5h-6zM1045 320h5v5h-5zM1056 320h6v5h-6zM882 325h6v5h-6zM916 325h6v5h-6zM1022 325h6v5h-6zM1062 325h5v5h-5zM1067 325h6v5h-6zM944 330h6v5h-6zM950 330h5v5h-5zM1028 330h6v5h-6zM838 335h5v5h-5zM866 335h5v5h-5zM871 335h6v5h-6zM888 335h6v5h-6zM916 335h6v5h-6zM950 335h5v5h-5zM1000 335h6v5h-6zM1034 335h5v5h-5zM815 340h6v5h-6zM826 340h6v5h-6zM854 340h6v5h-6zM950 340h5v5h-5zM1000 340h6v5h-6zM1045 340h5v5h-5zM810 345h5v5h-5zM854 345h6v5h-6zM966 345h6v5h-6zM978 345h5v5h-5zM983 345h6v5h-6zM1006 345h5v5h-5zM1034 345h5v5h-5zM1056 345h6v5h-6zM1078 345h6v5h-6zM877 350h5v5h-5zM944 350h6v5h-6zM972 350h6v5h-6zM1056 350h6v5h-6zM826 355h6v5h-6zM877 355h5v5h-5zM966 355h6v5h-6zM1000 355h6v5h-6zM1062 355h5v5h-5zM843 360h6v5h-6zM849 360h5v5h-5zM877 360h5v5h-5zM821 365h5v5h-5zM826 365h6v5h-6zM849 365h5v5h-5zM854 365h6v5h-6zM882 365h6v5h-6zM994 365h6v5h-6zM860 370h6v5h-6zM1073 370h5v5h-5zM1090 370h5v5h-5zM1062 375h5v5h-5zM1067 375h6v5h-6zM1073 375h5v5h-5zM1090 375h5v5h-5zM1000 380h6v5h-6zM1006 380h5v5h-5zM989 390h5v5h-5z"/><path fill="#629246" d="M966 150h6v5h-6zM938 155h6v5h-6zM899 160h6v5h-6zM1011 160h6v5h-6zM916 165h6v5h-6zM983 165h6v5h-6zM1039 165h6v5h-6zM1062 165h5v5h-5zM832 170h6v5h-6zM854 170h6v5h-6zM888 170h6v5h-6zM966 170h6v5h-6zM972 170h6v5h-6zM866 175h5v5h-5zM944 175h6v5h-6zM972 175h6v5h-6zM916 180h6v5h-6zM1017 180h5v5h-5zM1028 180h6v5h-6zM1050 180h6v5h-6zM866 185h5v5h-5zM871 185h6v5h-6zM916 185h6v5h-6zM1045 185h5v5h-5zM1050 185h6v5h-6zM798 190h6v5h-6zM815 190h6v5h-6zM832 190h6v5h-6zM950 190h5v5h-5zM966 190h6v5h-6zM972 190h6v5h-6zM1112 190h6v5h-6zM815 195h6v5h-6zM922 195h5v5h-5zM966 195h6v5h-6zM1095 195h6v5h-6zM1118 195h5v5h-5zM804 200h6v5h-6zM871 205h6v5h-6zM955 205h6v5h-6zM927 210h6v5h-6zM1006 210h5v5h-5zM950 215h5v5h-5zM1000 220h6v5h-6zM894 230h5v5h-5zM922 230h5v5h-5zM927 230h6v5h-6zM983 230h6v5h-6zM1006 230h5v5h-5zM927 235h6v5h-6zM933 235h5v5h-5zM994 235h6v5h-6zM978 240h5v5h-5zM933 245h5v5h-5zM1050 245h6v5h-6zM838 250h5v5h-5zM843 255h6v5h-6zM866 255h5v5h-5zM899 255h6v5h-6zM961 260h5v5h-5zM1017 260h5v5h-5zM854 265h6v5h-6zM860 265h6v5h-6zM961 265h5v5h-5zM994 265h6v5h-6zM922 270h5v5h-5zM1028 270h6v5h-6zM1078 270h6v5h-6zM1084 270h6v5h-6zM1067 280h6v5h-6zM815 285h6v5h-6zM854 285h6v5h-6zM888 285h6v5h-6zM944 285h6v5h-6zM1028 285h6v5h-6zM1067 285h6v5h-6zM793 290h5v5h-5zM910 290h6v5h-6zM1017 290h5v5h-5zM1062 290h5v5h-5zM849 295h5v5h-5zM866 295h5v5h-5zM871 295h6v5h-6zM955 295h6v5h-6zM961 295h5v5h-5zM938 300h6v5h-6zM1011 300h6v5h-6zM1045 300h5v5h-5zM888 305h6v5h-6zM899 305h6v5h-6zM978 305h5v5h-5zM916 310h6v5h-6zM944 310h6v5h-6zM849 315h5v5h-5zM983 315h6v5h-6zM972 320h6v5h-6zM888 325h6v5h-6zM938 325h6v5h-6zM961 330h5v5h-5zM983 330h6v5h-6zM1078 330h6v5h-6zM832 335h6v5h-6zM927 335h6v5h-6zM955 335h6v5h-6zM1045 335h5v5h-5zM849 340h5v5h-5zM877 340h5v5h-5zM888 340h6v5h-6zM894 340h5v5h-5zM938 340h6v5h-6zM849 345h5v5h-5zM1017 345h5v5h-5zM810 350h5v5h-5zM815 350h6v5h-6zM854 350h6v5h-6zM910 350h6v5h-6zM888 360h6v5h-6zM983 360h6v5h-6zM1045 360h5v5h-5zM1067 365h6v5h-6zM1073 365h5v5h-5zM1084 365h6v5h-6zM978 370h5v5h-5zM983 380h6v5h-6z"/><path fill="#b0aa72" d="M972 150h6v5h-6zM910 160h6v5h-6zM938 165h6v5h-6zM1011 165h6v5h-6zM938 175h6v5h-6zM838 180h5v5h-5zM832 185h6v5h-6zM894 185h5v5h-5zM1106 185h6v5h-6zM938 190h6v5h-6zM871 195h6v5h-6zM877 195h5v5h-5zM938 195h6v5h-6zM1028 200h6v5h-6zM1006 205h5v5h-5zM1022 205h6v5h-6zM1034 205h5v5h-5zM843 210h6v5h-6zM899 210h6v5h-6zM961 210h5v5h-5zM983 210h6v5h-6zM1017 210h5v5h-5zM899 215h6v5h-6zM905 215h5v5h-5zM916 215h6v5h-6zM888 220h6v5h-6zM922 220h5v5h-5zM989 220h5v5h-5zM882 225h6v5h-6zM894 225h5v5h-5zM927 225h6v5h-6zM838 245h5v5h-5zM815 260h6v5h-6zM804 280h6v5h-6zM888 280h6v5h-6zM1000 280h6v5h-6zM866 285h5v5h-5zM894 290h5v5h-5zM888 295h6v5h-6zM871 300h6v5h-6zM983 300h6v5h-6zM1106 300h6v5h-6zM989 305h5v5h-5zM1073 305h5v5h-5zM1067 315h6v5h-6zM1022 320h6v5h-6zM1039 320h6v5h-6zM1050 320h6v5h-6zM1045 325h5v5h-5zM849 330h5v5h-5zM860 330h6v5h-6zM1022 335h6v5h-6zM821 340h5v5h-5zM983 340h6v5h-6zM938 350h6v5h-6zM1050 350h6v5h-6zM978 365h5v5h-5zM1062 370h5v5h-5zM972 380h6v5h-6zM978 390h5v5h-5z"/><path fill="#407433" d="M910 155h6v5h-6zM860 160h6v5h-6zM871 160h6v5h-6zM888 160h6v5h-6zM933 160h5v5h-5zM938 160h6v5h-6zM944 160h6v5h-6zM843 165h6v5h-6zM866 165h5v5h-5zM871 165h6v5h-6zM978 165h5v5h-5zM933 170h5v5h-5zM961 170h5v5h-5zM983 170h6v5h-6zM1000 170h6v5h-6zM1045 170h5v5h-5zM849 175h5v5h-5zM1000 175h6v5h-6zM933 180h5v5h-5zM821 185h5v5h-5zM849 190h5v5h-5zM916 190h6v5h-6zM1006 190h5v5h-5zM1101 190h5v5h-5zM1050 195h6v5h-6zM782 200h5v5h-5zM821 200h5v5h-5zM832 200h6v5h-6zM927 200h6v5h-6zM966 200h6v5h-6zM1011 200h6v5h-6zM1078 200h6v5h-6zM849 205h5v5h-5zM938 205h6v5h-6zM1017 205h5v5h-5zM838 210h5v5h-5zM877 210h5v5h-5zM882 210h6v5h-6zM933 210h5v5h-5zM1050 210h6v5h-6zM877 215h5v5h-5zM882 215h6v5h-6zM1034 215h5v5h-5zM938 220h6v5h-6zM944 220h6v5h-6zM961 220h5v5h-5zM983 220h6v5h-6zM899 225h6v5h-6zM933 225h5v5h-5zM983 225h6v5h-6zM882 230h6v5h-6zM899 230h6v5h-6zM910 230h6v5h-6zM1000 230h6v5h-6zM882 235h6v5h-6zM894 235h5v5h-5zM899 235h6v5h-6zM944 235h6v5h-6zM1011 235h6v5h-6zM854 240h6v5h-6zM922 240h5v5h-5zM927 240h6v5h-6zM933 240h5v5h-5zM966 240h6v5h-6zM854 245h6v5h-6zM877 245h5v5h-5zM905 245h5v5h-5zM1028 245h6v5h-6zM978 250h5v5h-5zM1006 250h5v5h-5zM922 255h5v5h-5zM927 255h6v5h-6zM966 255h6v5h-6zM1050 255h6v5h-6zM1078 255h6v5h-6zM899 260h6v5h-6zM944 260h6v5h-6zM1050 260h6v5h-6zM1078 260h6v5h-6zM838 265h5v5h-5zM849 265h5v5h-5zM877 265h5v5h-5zM899 265h6v5h-6zM1078 265h6v5h-6zM843 270h6v5h-6zM905 270h5v5h-5zM961 270h5v5h-5zM989 270h5v5h-5zM871 275h6v5h-6zM877 275h5v5h-5zM905 275h5v5h-5zM1022 275h6v5h-6zM1045 275h5v5h-5zM798 280h6v5h-6zM860 280h6v5h-6zM905 280h5v5h-5zM1017 280h5v5h-5zM1022 280h6v5h-6zM1056 280h6v5h-6zM1090 280h5v5h-5zM1095 280h6v5h-6zM804 285h6v5h-6zM826 285h6v5h-6zM899 285h6v5h-6zM910 285h6v5h-6zM927 285h6v5h-6zM950 285h5v5h-5zM989 285h5v5h-5zM1011 285h6v5h-6zM804 290h6v5h-6zM821 290h5v5h-5zM826 290h6v5h-6zM843 290h6v5h-6zM922 290h5v5h-5zM938 290h6v5h-6zM944 290h6v5h-6zM950 290h5v5h-5zM1039 290h6v5h-6zM798 295h6v5h-6zM821 295h5v5h-5zM944 295h6v5h-6zM1090 295h5v5h-5zM793 300h5v5h-5zM804 300h6v5h-6zM821 300h5v5h-5zM826 300h6v5h-6zM854 300h6v5h-6zM927 300h6v5h-6zM972 300h6v5h-6zM793 305h5v5h-5zM826 305h6v5h-6zM860 305h6v5h-6zM927 305h6v5h-6zM1106 305h6v5h-6zM905 310h5v5h-5zM821 315h5v5h-5zM854 315h6v5h-6zM877 315h5v5h-5zM910 315h6v5h-6zM994 315h6v5h-6zM927 320h6v5h-6zM972 325h6v5h-6zM1006 325h5v5h-5zM888 330h6v5h-6zM989 330h5v5h-5zM1022 330h6v5h-6zM1034 330h5v5h-5zM1067 330h6v5h-6zM910 335h6v5h-6zM933 335h5v5h-5zM938 335h6v5h-6zM944 335h6v5h-6zM989 335h5v5h-5zM1039 335h6v5h-6zM1067 335h6v5h-6zM1073 335h5v5h-5zM810 340h5v5h-5zM966 340h6v5h-6zM1022 340h6v5h-6zM1028 340h6v5h-6zM1034 340h5v5h-5zM1073 340h5v5h-5zM888 345h6v5h-6zM916 345h6v5h-6zM922 345h5v5h-5zM1000 345h6v5h-6zM1022 345h6v5h-6zM1039 345h6v5h-6zM1045 345h5v5h-5zM1050 345h6v5h-6zM832 350h6v5h-6zM843 350h6v5h-6zM849 350h5v5h-5zM871 350h6v5h-6zM882 350h6v5h-6zM922 350h5v5h-5zM978 350h5v5h-5zM1011 350h6v5h-6zM1022 350h6v5h-6zM866 355h5v5h-5zM871 355h6v5h-6zM894 355h5v5h-5zM1017 355h5v5h-5zM1045 355h5v5h-5zM826 360h6v5h-6zM866 360h5v5h-5zM1006 360h5v5h-5zM961 365h5v5h-5zM1000 365h6v5h-6zM1056 365h6v5h-6zM815 370h6v5h-6zM821 370h5v5h-5zM826 375h6v5h-6zM966 375h6v5h-6zM972 375h6v5h-6zM882 380h6v5h-6zM888 380h6v5h-6zM860 385h6v5h-6zM866 385h5v5h-5zM877 385h5v5h-5zM994 385h6v5h-6zM1006 385h5v5h-5zM972 390h6v5h-6z"/><path fill="#4c823a" d="M916 155h6v5h-6zM950 155h5v5h-5zM978 155h5v5h-5zM866 160h5v5h-5zM972 160h6v5h-6zM832 165h6v5h-6zM854 165h6v5h-6zM888 165h6v5h-6zM933 165h5v5h-5zM972 165h6v5h-6zM905 170h5v5h-5zM950 170h5v5h-5zM994 170h6v5h-6zM843 175h6v5h-6zM910 175h6v5h-6zM955 175h6v5h-6zM961 175h5v5h-5zM989 175h5v5h-5zM1039 175h6v5h-6zM832 180h6v5h-6zM815 185h6v5h-6zM843 185h6v5h-6zM933 185h5v5h-5zM793 190h5v5h-5zM877 190h5v5h-5zM1000 190h6v5h-6zM1050 190h6v5h-6zM899 195h6v5h-6zM1101 195h5v5h-5zM1112 195h6v5h-6zM787 200h6v5h-6zM793 200h5v5h-5zM798 200h6v5h-6zM849 200h5v5h-5zM972 200h6v5h-6zM1039 200h6v5h-6zM1062 200h5v5h-5zM793 205h5v5h-5zM821 205h5v5h-5zM843 205h6v5h-6zM882 205h6v5h-6zM888 205h6v5h-6zM894 205h5v5h-5zM938 210h6v5h-6zM978 210h5v5h-5zM994 210h6v5h-6zM1045 210h5v5h-5zM832 215h6v5h-6zM838 215h5v5h-5zM933 215h5v5h-5zM978 220h5v5h-5zM866 225h5v5h-5zM905 225h5v5h-5zM938 225h6v5h-6zM871 230h6v5h-6zM877 230h5v5h-5zM905 230h5v5h-5zM938 230h6v5h-6zM944 230h6v5h-6zM950 230h5v5h-5zM871 235h6v5h-6zM950 235h5v5h-5zM866 240h5v5h-5zM938 240h6v5h-6zM1000 240h6v5h-6zM922 245h5v5h-5zM927 245h6v5h-6zM938 245h6v5h-6zM1056 245h6v5h-6zM826 250h6v5h-6zM832 250h6v5h-6zM866 250h5v5h-5zM950 250h5v5h-5zM1011 250h6v5h-6zM1028 250h6v5h-6zM1045 250h5v5h-5zM1050 250h6v5h-6zM944 255h6v5h-6zM978 255h5v5h-5zM1022 255h6v5h-6zM838 260h5v5h-5zM843 260h6v5h-6zM877 260h5v5h-5zM1056 260h6v5h-6zM1084 260h6v5h-6zM832 265h6v5h-6zM922 265h5v5h-5zM938 265h6v5h-6zM1050 265h6v5h-6zM1056 265h6v5h-6zM1084 265h6v5h-6zM866 270h5v5h-5zM910 270h6v5h-6zM916 270h6v5h-6zM938 270h6v5h-6zM983 270h6v5h-6zM1011 270h6v5h-6zM899 275h6v5h-6zM916 275h6v5h-6zM1011 275h6v5h-6zM1017 275h5v5h-5zM1095 275h6v5h-6zM838 280h5v5h-5zM899 280h6v5h-6zM1011 280h6v5h-6zM1101 280h5v5h-5zM838 285h5v5h-5zM1045 285h5v5h-5zM1050 285h6v5h-6zM1056 285h6v5h-6zM1062 285h5v5h-5zM1112 285h6v5h-6zM927 290h6v5h-6zM933 290h5v5h-5zM1022 290h6v5h-6zM1028 290h6v5h-6zM1022 295h6v5h-6zM1039 295h6v5h-6zM843 300h6v5h-6zM849 300h5v5h-5zM860 300h6v5h-6zM916 300h6v5h-6zM966 300h6v5h-6zM1084 300h6v5h-6zM1090 300h5v5h-5zM810 305h5v5h-5zM832 305h6v5h-6zM849 305h5v5h-5zM910 305h6v5h-6zM944 305h6v5h-6zM966 305h6v5h-6zM1000 305h6v5h-6zM1056 305h6v5h-6zM1062 305h5v5h-5zM1078 305h6v5h-6zM826 310h6v5h-6zM877 310h5v5h-5zM882 310h6v5h-6zM961 310h5v5h-5zM994 310h6v5h-6zM1028 310h6v5h-6zM1112 310h6v5h-6zM882 315h6v5h-6zM899 315h6v5h-6zM905 315h5v5h-5zM1022 315h6v5h-6zM1039 315h6v5h-6zM1073 315h5v5h-5zM910 320h6v5h-6zM1000 320h6v5h-6zM1028 320h6v5h-6zM877 325h5v5h-5zM910 325h6v5h-6zM922 325h5v5h-5zM927 325h6v5h-6zM966 325h6v5h-6zM1056 325h6v5h-6zM871 330h6v5h-6zM910 330h6v5h-6zM916 330h6v5h-6zM933 330h5v5h-5zM938 330h6v5h-6zM1000 330h6v5h-6zM1039 330h6v5h-6zM1073 330h5v5h-5zM994 335h6v5h-6zM860 340h6v5h-6zM944 340h6v5h-6zM978 340h5v5h-5zM1006 340h5v5h-5zM1050 340h6v5h-6zM1062 340h5v5h-5zM815 345h6v5h-6zM821 345h5v5h-5zM843 345h6v5h-6zM860 345h6v5h-6zM927 345h6v5h-6zM944 345h6v5h-6zM950 345h5v5h-5zM989 345h5v5h-5zM821 350h5v5h-5zM866 350h5v5h-5zM894 350h5v5h-5zM927 350h6v5h-6zM1017 350h5v5h-5zM1062 350h5v5h-5zM832 355h6v5h-6zM888 355h6v5h-6zM978 355h5v5h-5zM1006 355h5v5h-5zM1011 355h6v5h-6zM854 360h6v5h-6zM860 360h6v5h-6zM950 360h5v5h-5zM961 360h5v5h-5zM1000 360h6v5h-6zM966 365h6v5h-6zM1006 365h5v5h-5zM849 370h5v5h-5zM966 370h6v5h-6zM994 370h6v5h-6zM1006 370h5v5h-5zM989 375h5v5h-5zM1000 375h6v5h-6zM815 380h6v5h-6zM866 380h5v5h-5zM871 380h6v5h-6zM877 380h5v5h-5zM854 385h6v5h-6zM871 385h6v5h-6zM989 385h5v5h-5zM1073 385h5v5h-5z"/><path fill="#2d5231" d="M922 155h5v5h-5zM1006 155h5v5h-5zM1011 155h6v5h-6zM922 165h5v5h-5zM927 165h6v5h-6zM955 165h6v5h-6zM1006 165h5v5h-5zM1028 165h6v5h-6zM916 170h6v5h-6zM972 180h6v5h-6zM1034 180h5v5h-5zM983 190h6v5h-6zM1084 190h6v5h-6zM882 195h6v5h-6zM1022 195h6v5h-6zM1084 195h6v5h-6zM944 200h6v5h-6zM1050 200h6v5h-6zM798 205h6v5h-6zM815 205h6v5h-6zM950 205h5v5h-5zM1050 205h6v5h-6zM1062 205h5v5h-5zM849 210h5v5h-5zM871 215h6v5h-6zM966 220h6v5h-6zM1011 225h6v5h-6zM1017 225h5v5h-5zM888 235h6v5h-6zM899 240h6v5h-6zM905 240h5v5h-5zM899 245h6v5h-6zM1039 250h6v5h-6zM1067 250h6v5h-6zM888 255h6v5h-6zM955 255h6v5h-6zM1000 255h6v5h-6zM821 260h5v5h-5zM910 260h6v5h-6zM978 260h5v5h-5zM866 265h5v5h-5zM910 265h6v5h-6zM882 270h6v5h-6zM894 270h5v5h-5zM966 270h6v5h-6zM1039 270h6v5h-6zM1062 270h5v5h-5zM894 275h5v5h-5zM1034 275h5v5h-5zM843 280h6v5h-6zM854 280h6v5h-6zM944 280h6v5h-6zM849 285h5v5h-5zM866 290h5v5h-5zM860 295h6v5h-6zM1000 295h6v5h-6zM1006 295h5v5h-5zM1062 295h5v5h-5zM882 300h6v5h-6zM950 300h5v5h-5zM1050 300h6v5h-6zM804 305h6v5h-6zM955 305h6v5h-6zM1022 305h6v5h-6zM815 310h6v5h-6zM922 310h5v5h-5zM989 310h5v5h-5zM1017 310h5v5h-5zM972 315h6v5h-6zM989 315h5v5h-5zM1000 315h6v5h-6zM1011 315h6v5h-6zM838 320h5v5h-5zM961 320h5v5h-5zM832 325h6v5h-6zM955 325h6v5h-6zM1073 325h5v5h-5zM854 330h6v5h-6zM894 330h5v5h-5zM854 335h6v5h-6zM882 335h6v5h-6zM966 335h6v5h-6zM916 340h6v5h-6zM1017 340h5v5h-5zM1067 340h6v5h-6zM1078 340h6v5h-6zM1073 345h5v5h-5zM1000 350h6v5h-6zM972 355h6v5h-6zM815 360h6v5h-6zM882 360h6v5h-6zM955 360h6v5h-6zM966 360h6v5h-6zM972 360h6v5h-6zM972 365h6v5h-6zM882 370h6v5h-6zM860 380h6v5h-6zM1067 380h6v5h-6zM978 385h5v5h-5z"/><path fill="#3a6634" d="M927 155h6v5h-6zM944 155h6v5h-6zM894 160h5v5h-5zM955 160h6v5h-6zM1006 160h5v5h-5zM1034 160h5v5h-5zM838 170h5v5h-5zM882 170h6v5h-6zM1028 170h6v5h-6zM877 175h5v5h-5zM983 175h6v5h-6zM983 180h6v5h-6zM1056 180h6v5h-6zM1062 180h5v5h-5zM978 185h5v5h-5zM989 185h5v5h-5zM978 190h5v5h-5zM1022 190h6v5h-6zM1034 190h5v5h-5zM1078 190h6v5h-6zM1118 190h5v5h-5zM983 195h6v5h-6zM1028 195h6v5h-6zM1056 195h6v5h-6zM1078 195h6v5h-6zM815 200h6v5h-6zM860 200h6v5h-6zM1045 200h5v5h-5zM1006 215h5v5h-5zM910 220h6v5h-6zM1017 220h5v5h-5zM910 225h6v5h-6zM966 235h6v5h-6zM910 240h6v5h-6zM950 245h5v5h-5zM989 245h5v5h-5zM961 250h5v5h-5zM1067 255h6v5h-6zM1073 255h5v5h-5zM1039 260h6v5h-6zM950 265h5v5h-5zM1073 265h5v5h-5zM860 270h6v5h-6zM882 275h6v5h-6zM950 275h5v5h-5zM1039 275h6v5h-6zM826 280h6v5h-6zM882 280h6v5h-6zM894 280h5v5h-5zM950 280h5v5h-5zM972 280h6v5h-6zM1034 280h5v5h-5zM832 295h6v5h-6zM994 295h6v5h-6zM1011 295h6v5h-6zM1034 300h5v5h-5zM994 305h6v5h-6zM1034 305h5v5h-5zM1050 305h6v5h-6zM871 310h6v5h-6zM927 310h6v5h-6zM871 315h6v5h-6zM894 315h5v5h-5zM961 315h5v5h-5zM1045 315h5v5h-5zM899 320h6v5h-6zM1006 320h5v5h-5zM877 330h5v5h-5zM882 330h6v5h-6zM1056 330h6v5h-6zM821 335h5v5h-5zM826 335h6v5h-6zM860 335h6v5h-6zM877 335h5v5h-5zM910 340h6v5h-6zM950 350h5v5h-5zM832 360h6v5h-6zM838 360h5v5h-5zM978 360h5v5h-5zM810 365h5v5h-5zM815 365h6v5h-6zM826 370h6v5h-6zM888 370h6v5h-6zM983 385h6v5h-6zM994 395h6v5h-6z"/><path fill="#6e9a50" d="M933 155h5v5h-5zM955 155h6v5h-6zM983 160h6v5h-6zM1028 160h6v5h-6zM882 165h6v5h-6zM871 170h6v5h-6zM1011 170h6v5h-6zM854 175h6v5h-6zM871 175h6v5h-6zM888 175h6v5h-6zM894 175h5v5h-5zM978 175h5v5h-5zM1017 175h5v5h-5zM860 180h6v5h-6zM871 180h6v5h-6zM905 180h5v5h-5zM922 180h5v5h-5zM927 180h6v5h-6zM950 180h5v5h-5zM955 180h6v5h-6zM1045 180h5v5h-5zM810 185h5v5h-5zM854 185h6v5h-6zM905 185h5v5h-5zM910 185h6v5h-6zM938 185h6v5h-6zM944 185h6v5h-6zM950 185h5v5h-5zM955 185h6v5h-6zM961 185h5v5h-5zM804 190h6v5h-6zM826 190h6v5h-6zM899 190h6v5h-6zM927 190h6v5h-6zM1028 190h6v5h-6zM944 195h6v5h-6zM950 195h5v5h-5zM1090 195h5v5h-5zM1067 200h6v5h-6zM804 205h6v5h-6zM905 205h5v5h-5zM860 210h6v5h-6zM871 210h6v5h-6zM950 210h5v5h-5zM966 210h6v5h-6zM927 215h6v5h-6zM1028 215h6v5h-6zM994 220h6v5h-6zM944 225h6v5h-6zM1017 230h5v5h-5zM877 235h5v5h-5zM978 235h5v5h-5zM989 235h5v5h-5zM1006 240h5v5h-5zM1050 240h6v5h-6zM1000 245h6v5h-6zM1011 245h6v5h-6zM1017 245h5v5h-5zM899 250h6v5h-6zM916 250h6v5h-6zM927 250h6v5h-6zM972 250h6v5h-6zM877 255h5v5h-5zM905 255h5v5h-5zM916 255h6v5h-6zM1056 255h6v5h-6zM826 260h6v5h-6zM1006 260h5v5h-5zM821 265h5v5h-5zM916 265h6v5h-6zM989 265h5v5h-5zM1000 265h6v5h-6zM1017 265h5v5h-5zM1022 265h6v5h-6zM899 270h6v5h-6zM961 275h5v5h-5zM922 280h5v5h-5zM933 280h5v5h-5zM955 280h6v5h-6zM978 280h5v5h-5zM933 285h5v5h-5zM832 290h6v5h-6zM916 290h6v5h-6zM961 290h5v5h-5zM1050 290h6v5h-6zM1067 290h6v5h-6zM1073 290h5v5h-5zM1112 290h6v5h-6zM905 295h5v5h-5zM1084 295h6v5h-6zM1067 300h6v5h-6zM1112 300h6v5h-6zM882 305h6v5h-6zM888 310h6v5h-6zM894 310h5v5h-5zM978 310h5v5h-5zM983 310h6v5h-6zM843 315h6v5h-6zM944 315h6v5h-6zM1056 315h6v5h-6zM860 320h6v5h-6zM894 320h5v5h-5zM905 320h5v5h-5zM994 320h6v5h-6zM1011 320h6v5h-6zM1017 320h5v5h-5zM854 325h6v5h-6zM933 325h5v5h-5zM922 330h5v5h-5zM978 330h5v5h-5zM899 335h6v5h-6zM905 340h5v5h-5zM866 345h5v5h-5zM882 345h6v5h-6zM910 345h6v5h-6zM933 345h5v5h-5zM938 345h6v5h-6zM1011 345h6v5h-6zM1067 345h6v5h-6zM826 350h6v5h-6zM899 350h6v5h-6zM905 350h5v5h-5zM916 350h6v5h-6zM1073 350h5v5h-5zM815 355h6v5h-6zM849 355h5v5h-5zM854 355h6v5h-6zM860 355h6v5h-6zM905 355h5v5h-5zM950 355h5v5h-5zM1073 355h5v5h-5zM1078 355h6v5h-6zM1050 360h6v5h-6zM1073 360h5v5h-5zM1000 370h6v5h-6zM1067 370h6v5h-6zM1084 370h6v5h-6zM815 375h6v5h-6zM1078 375h6v5h-6zM983 395h6v5h-6z"/><path fill="#457c35" d="M966 155h6v5h-6zM983 155h6v5h-6zM849 165h5v5h-5zM950 165h5v5h-5zM1022 165h6v5h-6zM1045 165h5v5h-5zM849 170h5v5h-5zM955 170h6v5h-6zM978 170h5v5h-5zM1039 170h6v5h-6zM899 175h6v5h-6zM905 175h5v5h-5zM922 175h5v5h-5zM950 175h5v5h-5zM994 175h6v5h-6zM1050 175h6v5h-6zM843 180h6v5h-6zM849 180h5v5h-5zM938 180h6v5h-6zM989 180h5v5h-5zM1000 185h6v5h-6zM1062 185h5v5h-5zM1084 185h6v5h-6zM854 190h6v5h-6zM860 190h6v5h-6zM882 190h6v5h-6zM989 190h5v5h-5zM1067 190h6v5h-6zM1106 190h6v5h-6zM810 195h5v5h-5zM854 195h6v5h-6zM894 195h5v5h-5zM989 195h5v5h-5zM994 195h6v5h-6zM1000 195h6v5h-6zM1106 195h6v5h-6zM877 200h5v5h-5zM899 200h6v5h-6zM922 200h5v5h-5zM950 200h5v5h-5zM989 200h5v5h-5zM787 205h6v5h-6zM810 205h5v5h-5zM922 205h5v5h-5zM966 205h6v5h-6zM989 205h5v5h-5zM1011 205h6v5h-6zM1039 205h6v5h-6zM1056 205h6v5h-6zM832 210h6v5h-6zM955 210h6v5h-6zM989 210h5v5h-5zM1039 210h6v5h-6zM989 215h5v5h-5zM994 215h6v5h-6zM1039 215h6v5h-6zM905 235h5v5h-5zM910 235h6v5h-6zM860 240h6v5h-6zM972 240h6v5h-6zM1017 240h5v5h-5zM1034 240h5v5h-5zM843 245h6v5h-6zM860 245h6v5h-6zM882 245h6v5h-6zM910 245h6v5h-6zM1039 245h6v5h-6zM871 250h6v5h-6zM944 250h6v5h-6zM1000 250h6v5h-6zM821 255h5v5h-5zM826 255h6v5h-6zM1028 255h6v5h-6zM1034 255h5v5h-5zM832 260h6v5h-6zM882 260h6v5h-6zM1073 260h5v5h-5zM804 265h6v5h-6zM843 265h6v5h-6zM882 265h6v5h-6zM905 265h5v5h-5zM838 270h5v5h-5zM849 270h5v5h-5zM871 270h6v5h-6zM994 270h6v5h-6zM1017 270h5v5h-5zM1022 270h6v5h-6zM1050 270h6v5h-6zM1067 270h6v5h-6zM1073 270h5v5h-5zM843 275h6v5h-6zM849 275h5v5h-5zM866 275h5v5h-5zM910 275h6v5h-6zM922 275h5v5h-5zM989 275h5v5h-5zM1050 275h6v5h-6zM1073 275h5v5h-5zM849 280h5v5h-5zM910 280h6v5h-6zM916 280h6v5h-6zM983 280h6v5h-6zM989 280h5v5h-5zM994 280h6v5h-6zM1039 280h6v5h-6zM1050 280h6v5h-6zM1106 280h6v5h-6zM798 285h6v5h-6zM994 285h6v5h-6zM1039 285h6v5h-6zM1106 285h6v5h-6zM1034 290h5v5h-5zM804 295h6v5h-6zM843 295h6v5h-6zM927 295h6v5h-6zM978 295h5v5h-5zM1028 295h6v5h-6zM1112 295h6v5h-6zM910 300h6v5h-6zM922 300h5v5h-5zM1095 300h6v5h-6zM815 305h6v5h-6zM843 305h6v5h-6zM916 305h6v5h-6zM950 305h5v5h-5zM1006 305h5v5h-5zM804 310h6v5h-6zM821 310h5v5h-5zM832 310h6v5h-6zM838 310h5v5h-5zM854 310h6v5h-6zM860 310h6v5h-6zM899 310h6v5h-6zM1073 310h5v5h-5zM1106 310h6v5h-6zM826 315h6v5h-6zM832 315h6v5h-6zM838 315h5v5h-5zM860 315h6v5h-6zM922 315h5v5h-5zM927 315h6v5h-6zM826 320h6v5h-6zM877 320h5v5h-5zM922 320h5v5h-5zM1062 320h5v5h-5zM826 325h6v5h-6zM994 325h6v5h-6zM1000 325h6v5h-6zM1034 325h5v5h-5zM832 330h6v5h-6zM838 330h5v5h-5zM966 330h6v5h-6zM994 330h6v5h-6zM894 335h5v5h-5zM1006 335h5v5h-5zM1028 335h6v5h-6zM866 340h5v5h-5zM927 340h6v5h-6zM972 340h6v5h-6zM989 340h5v5h-5zM994 340h6v5h-6zM1039 340h6v5h-6zM905 345h5v5h-5zM972 345h6v5h-6zM1062 345h5v5h-5zM838 350h5v5h-5zM888 350h6v5h-6zM955 350h6v5h-6zM966 350h6v5h-6zM1006 350h5v5h-5zM1039 350h6v5h-6zM838 355h5v5h-5zM843 355h6v5h-6zM882 355h6v5h-6zM1056 355h6v5h-6zM821 360h5v5h-5zM989 360h5v5h-5zM994 360h6v5h-6zM1056 360h6v5h-6zM1062 360h5v5h-5zM877 365h5v5h-5zM1062 365h5v5h-5zM871 370h6v5h-6zM877 370h5v5h-5zM961 370h5v5h-5zM972 370h6v5h-6zM989 370h5v5h-5zM810 375h5v5h-5zM877 375h5v5h-5zM882 375h6v5h-6zM888 375h6v5h-6zM978 375h5v5h-5zM994 375h6v5h-6zM849 380h5v5h-5zM966 380h6v5h-6zM989 380h5v5h-5zM994 380h6v5h-6zM966 390h6v5h-6zM994 390h6v5h-6zM989 395h5v5h-5z"/><path fill="#8f9c5e" d="M972 155h6v5h-6zM1000 155h6v5h-6zM877 180h5v5h-5zM1118 185h5v5h-5zM871 190h6v5h-6zM1000 200h6v5h-6zM888 210h6v5h-6zM910 210h6v5h-6zM916 210h6v5h-6zM860 220h6v5h-6zM894 220h5v5h-5zM933 220h5v5h-5zM972 220h6v5h-6zM854 225h6v5h-6zM888 225h6v5h-6zM966 225h6v5h-6zM994 225h6v5h-6zM933 230h5v5h-5zM1034 250h5v5h-5zM854 260h6v5h-6zM894 265h5v5h-5zM927 275h6v5h-6zM966 280h6v5h-6zM966 285h6v5h-6zM966 290h6v5h-6zM972 290h6v5h-6zM1101 290h5v5h-5zM1106 290h6v5h-6zM894 295h5v5h-5zM1106 295h6v5h-6zM994 300h6v5h-6zM1056 300h6v5h-6zM983 305h6v5h-6zM1062 310h5v5h-5zM1062 315h5v5h-5zM871 320h6v5h-6zM950 320h5v5h-5zM978 320h5v5h-5zM1034 320h5v5h-5zM866 325h5v5h-5zM905 325h5v5h-5zM955 340h6v5h-6zM894 345h5v5h-5zM1045 350h5v5h-5zM821 355h5v5h-5zM1050 355h6v5h-6zM989 365h5v5h-5zM810 380h5v5h-5zM966 385h6v5h-6zM978 395h5v5h-5z"/><path fill="#355c35" d="M1017 155h5v5h-5zM961 160h5v5h-5zM1000 160h6v5h-6zM882 175h6v5h-6zM1067 175h6v5h-6zM888 180h6v5h-6zM1039 180h6v5h-6zM1067 180h6v5h-6zM882 185h6v5h-6zM983 185h6v5h-6zM1006 185h5v5h-5zM1039 185h6v5h-6zM1056 185h6v5h-6zM1101 185h5v5h-5zM905 190h5v5h-5zM1011 190h6v5h-6zM1056 190h6v5h-6zM1062 190h5v5h-5zM826 195h6v5h-6zM910 195h6v5h-6zM916 195h6v5h-6zM955 195h6v5h-6zM961 195h5v5h-5zM1011 195h6v5h-6zM1062 195h5v5h-5zM1067 195h6v5h-6zM1073 195h5v5h-5zM922 210h5v5h-5zM860 215h6v5h-6zM972 215h6v5h-6zM916 220h6v5h-6zM950 220h5v5h-5zM1011 220h6v5h-6zM1022 220h6v5h-6zM1028 220h6v5h-6zM916 230h6v5h-6zM972 230h6v5h-6zM972 235h6v5h-6zM950 240h5v5h-5zM994 240h6v5h-6zM944 245h6v5h-6zM860 250h6v5h-6zM877 250h5v5h-5zM894 250h5v5h-5zM922 250h5v5h-5zM989 250h5v5h-5zM994 250h6v5h-6zM882 255h6v5h-6zM894 255h5v5h-5zM989 255h5v5h-5zM866 260h5v5h-5zM871 260h6v5h-6zM916 260h6v5h-6zM950 260h5v5h-5zM983 260h6v5h-6zM1067 260h6v5h-6zM944 265h6v5h-6zM978 265h5v5h-5zM983 265h6v5h-6zM1039 265h6v5h-6zM1062 265h5v5h-5zM815 270h6v5h-6zM854 270h6v5h-6zM877 270h5v5h-5zM888 270h6v5h-6zM1034 270h5v5h-5zM810 275h5v5h-5zM815 275h6v5h-6zM860 275h6v5h-6zM972 275h6v5h-6zM821 280h5v5h-5zM821 285h5v5h-5zM877 285h5v5h-5zM894 285h5v5h-5zM989 290h5v5h-5zM838 295h5v5h-5zM989 295h5v5h-5zM798 300h6v5h-6zM899 300h6v5h-6zM955 300h6v5h-6zM961 300h5v5h-5zM1022 300h6v5h-6zM1067 305h6v5h-6zM810 310h5v5h-5zM866 310h5v5h-5zM1011 310h6v5h-6zM1045 310h5v5h-5zM810 315h5v5h-5zM815 315h6v5h-6zM955 315h6v5h-6zM966 315h6v5h-6zM1017 315h5v5h-5zM1050 315h6v5h-6zM815 320h6v5h-6zM832 320h6v5h-6zM955 320h6v5h-6zM966 320h6v5h-6zM983 320h6v5h-6zM899 325h6v5h-6zM944 325h6v5h-6zM821 330h5v5h-5zM866 330h5v5h-5zM972 330h6v5h-6zM832 340h6v5h-6zM1034 350h5v5h-5zM1022 355h6v5h-6zM810 360h5v5h-5zM860 365h6v5h-6zM955 365h6v5h-6zM849 375h5v5h-5zM978 380h5v5h-5zM1084 380h6v5h-6zM1084 385h6v5h-6z"/><path fill="#7ca05a" d="M877 160h5v5h-5zM978 160h5v5h-5zM910 165h6v5h-6zM944 165h6v5h-6zM1050 165h6v5h-6zM866 170h5v5h-5zM910 170h6v5h-6zM1022 170h6v5h-6zM1062 170h5v5h-5zM1067 170h6v5h-6zM1011 175h6v5h-6zM1022 175h6v5h-6zM1056 175h6v5h-6zM854 180h6v5h-6zM866 180h5v5h-5zM882 180h6v5h-6zM961 180h5v5h-5zM1022 180h6v5h-6zM860 185h6v5h-6zM922 185h5v5h-5zM927 185h6v5h-6zM994 185h6v5h-6zM1011 185h6v5h-6zM1017 185h5v5h-5zM1022 185h6v5h-6zM1028 185h6v5h-6zM1067 185h6v5h-6zM1095 185h6v5h-6zM782 190h5v5h-5zM821 190h5v5h-5zM843 190h6v5h-6zM894 190h5v5h-5zM922 190h5v5h-5zM1095 190h6v5h-6zM782 195h5v5h-5zM838 195h5v5h-5zM866 195h5v5h-5zM927 195h6v5h-6zM972 195h6v5h-6zM978 195h5v5h-5zM1045 195h5v5h-5zM871 200h6v5h-6zM1073 200h5v5h-5zM782 205h5v5h-5zM877 205h5v5h-5zM910 205h6v5h-6zM916 205h6v5h-6zM854 210h6v5h-6zM866 210h5v5h-5zM944 210h6v5h-6zM972 210h6v5h-6zM1028 210h6v5h-6zM854 215h6v5h-6zM866 215h5v5h-5zM944 215h6v5h-6zM1000 215h6v5h-6zM955 220h6v5h-6zM961 225h5v5h-5zM978 225h5v5h-5zM989 230h5v5h-5zM994 230h6v5h-6zM1006 235h5v5h-5zM1011 240h6v5h-6zM1045 240h5v5h-5zM849 245h5v5h-5zM843 250h6v5h-6zM905 250h5v5h-5zM910 250h6v5h-6zM1062 250h5v5h-5zM832 255h6v5h-6zM854 255h6v5h-6zM1062 255h5v5h-5zM860 260h6v5h-6zM989 260h5v5h-5zM994 260h6v5h-6zM1011 260h6v5h-6zM826 265h6v5h-6zM1011 265h6v5h-6zM804 270h6v5h-6zM927 270h6v5h-6zM933 270h5v5h-5zM838 275h5v5h-5zM1000 275h6v5h-6zM1006 275h5v5h-5zM1084 275h6v5h-6zM810 280h5v5h-5zM815 280h6v5h-6zM871 280h6v5h-6zM961 280h5v5h-5zM1028 280h6v5h-6zM1073 280h5v5h-5zM1084 280h6v5h-6zM955 285h6v5h-6zM978 285h5v5h-5zM1022 285h6v5h-6zM1073 285h5v5h-5zM877 290h5v5h-5zM882 290h6v5h-6zM899 290h6v5h-6zM905 290h5v5h-5zM955 290h6v5h-6zM978 290h5v5h-5zM983 290h6v5h-6zM1011 290h6v5h-6zM1078 290h6v5h-6zM793 295h5v5h-5zM983 295h6v5h-6zM1017 295h5v5h-5zM1078 295h6v5h-6zM877 300h5v5h-5zM877 305h5v5h-5zM938 305h6v5h-6zM1017 305h5v5h-5zM966 310h6v5h-6zM1078 310h6v5h-6zM916 315h6v5h-6zM950 315h5v5h-5zM978 315h5v5h-5zM821 320h5v5h-5zM854 320h6v5h-6zM888 320h6v5h-6zM938 320h6v5h-6zM860 325h6v5h-6zM989 325h5v5h-5zM899 330h6v5h-6zM927 330h6v5h-6zM1006 330h5v5h-5zM905 335h5v5h-5zM922 335h5v5h-5zM978 335h5v5h-5zM983 335h6v5h-6zM1050 335h6v5h-6zM1078 335h6v5h-6zM843 340h6v5h-6zM871 340h6v5h-6zM882 340h6v5h-6zM899 340h6v5h-6zM1011 340h6v5h-6zM832 345h6v5h-6zM871 345h6v5h-6zM877 345h5v5h-5zM899 345h6v5h-6zM983 350h6v5h-6zM1078 350h6v5h-6zM910 355h6v5h-6zM1078 360h6v5h-6zM894 365h5v5h-5zM1078 365h6v5h-6zM983 370h6v5h-6zM983 375h6v5h-6zM854 380h6v5h-6z"/><path fill="#355a3e" d="M905 160h5v5h-5zM894 180h5v5h-5zM787 195h6v5h-6zM838 200h5v5h-5zM1056 200h6v5h-6zM854 205h6v5h-6zM1017 215h5v5h-5zM871 225h6v5h-6zM961 235h5v5h-5zM955 240h6v5h-6zM961 255h5v5h-5zM955 260h6v5h-6zM933 265h5v5h-5zM978 270h5v5h-5zM983 275h6v5h-6zM1078 280h6v5h-6zM1095 290h6v5h-6zM1095 295h6v5h-6zM866 305h5v5h-5zM933 315h5v5h-5zM843 320h6v5h-6zM972 335h6v5h-6zM1056 335h6v5h-6zM961 350h5v5h-5zM989 355h5v5h-5z"/><path fill="#30592f" d="M927 160h6v5h-6zM1022 160h6v5h-6zM894 165h5v5h-5zM961 165h5v5h-5zM1000 165h6v5h-6zM1034 165h5v5h-5zM877 170h5v5h-5zM832 175h6v5h-6zM838 175h5v5h-5zM927 175h6v5h-6zM966 180h6v5h-6zM978 180h5v5h-5zM1000 180h6v5h-6zM1006 180h5v5h-5zM966 185h6v5h-6zM972 185h6v5h-6zM1034 185h5v5h-5zM910 190h6v5h-6zM961 190h5v5h-5zM1073 190h5v5h-5zM905 195h5v5h-5zM944 205h6v5h-6zM978 215h5v5h-5zM916 225h6v5h-6zM1022 225h6v5h-6zM1028 225h6v5h-6zM966 230h6v5h-6zM1000 235h6v5h-6zM894 240h5v5h-5zM944 240h6v5h-6zM989 240h5v5h-5zM871 245h6v5h-6zM888 245h6v5h-6zM894 245h5v5h-5zM994 245h6v5h-6zM1022 245h6v5h-6zM882 250h6v5h-6zM955 250h6v5h-6zM860 255h6v5h-6zM994 255h6v5h-6zM1039 255h6v5h-6zM1034 260h5v5h-5zM871 265h6v5h-6zM1034 265h5v5h-5zM1067 265h6v5h-6zM810 270h5v5h-5zM944 270h6v5h-6zM972 270h6v5h-6zM854 275h6v5h-6zM888 275h6v5h-6zM944 275h6v5h-6zM966 275h6v5h-6zM1056 275h6v5h-6zM1062 275h5v5h-5zM877 280h5v5h-5zM843 285h6v5h-6zM838 290h5v5h-5zM994 290h6v5h-6zM1000 290h6v5h-6zM1006 290h5v5h-5zM1056 290h6v5h-6zM815 295h6v5h-6zM1056 295h6v5h-6zM1028 300h6v5h-6zM1039 300h6v5h-6zM798 305h6v5h-6zM922 305h5v5h-5zM961 305h5v5h-5zM972 305h6v5h-6zM1028 305h6v5h-6zM1039 305h6v5h-6zM1045 305h5v5h-5zM972 310h6v5h-6zM1050 310h6v5h-6zM1056 310h6v5h-6zM866 315h5v5h-5zM1006 315h5v5h-5zM944 320h6v5h-6zM1067 320h6v5h-6zM838 325h5v5h-5zM950 325h5v5h-5zM961 325h5v5h-5zM978 325h5v5h-5zM983 325h6v5h-6zM826 330h6v5h-6zM955 330h6v5h-6zM994 345h6v5h-6zM1006 375h5v5h-5zM1078 380h6v5h-6zM1078 385h6v5h-6z"/><path fill="#98a062" d="M1017 160h5v5h-5zM804 185h6v5h-6zM1039 190h6v5h-6zM1034 195h5v5h-5zM1039 195h6v5h-6zM1022 200h6v5h-6zM832 205h6v5h-6zM905 210h5v5h-5zM849 215h5v5h-5zM888 215h6v5h-6zM910 215h6v5h-6zM966 215h6v5h-6zM983 215h6v5h-6zM854 220h6v5h-6zM882 220h6v5h-6zM849 250h5v5h-5zM894 260h5v5h-5zM888 265h6v5h-6zM832 275h6v5h-6zM1006 280h5v5h-5zM938 285h6v5h-6zM972 285h6v5h-6zM1006 285h5v5h-5zM854 290h6v5h-6zM888 290h6v5h-6zM972 295h6v5h-6zM888 300h6v5h-6zM989 300h5v5h-5zM1101 300h5v5h-5zM843 310h6v5h-6zM849 310h5v5h-5zM1028 325h6v5h-6zM1039 325h6v5h-6zM843 335h6v5h-6zM849 335h5v5h-5zM961 340h5v5h-5zM961 345h5v5h-5zM1067 350h6v5h-6zM804 370h6v5h-6zM810 370h5v5h-5zM866 370h5v5h-5zM804 375h6v5h-6zM821 375h5v5h-5zM866 375h5v5h-5zM871 375h6v5h-6zM972 385h6v5h-6zM1000 385h6v5h-6z"/><path fill="#2c4a36" d="M899 165h6v5h-6zM955 190h6v5h-6zM854 200h6v5h-6zM955 200h6v5h-6zM961 200h5v5h-5zM961 205h5v5h-5zM866 220h5v5h-5zM1006 225h5v5h-5zM955 230h6v5h-6zM961 230h5v5h-5zM955 235h6v5h-6zM961 245h5v5h-5zM1022 260h6v5h-6zM1028 265h6v5h-6zM826 270h6v5h-6zM955 270h6v5h-6zM1062 280h5v5h-5zM1090 290h5v5h-5zM1017 330h5v5h-5zM1011 335h6v5h-6zM1062 335h5v5h-5zM860 350h6v5h-6zM994 350h6v5h-6zM1028 350h6v5h-6zM944 355h6v5h-6zM955 355h6v5h-6zM994 355h6v5h-6zM871 365h6v5h-6zM854 370h6v5h-6zM854 375h6v5h-6zM860 375h6v5h-6z"/><path fill="#3c5e40" d="M905 165h5v5h-5zM1062 175h5v5h-5zM860 205h6v5h-6zM955 215h6v5h-6zM938 260h6v5h-6zM821 270h5v5h-5zM821 275h5v5h-5zM955 275h6v5h-6zM927 280h6v5h-6zM922 285h5v5h-5zM1084 285h6v5h-6zM1045 295h5v5h-5zM933 310h5v5h-5zM938 310h6v5h-6zM922 340h5v5h-5zM871 360h6v5h-6zM1090 365h5v5h-5zM894 370h5v5h-5z"/><path fill="#a3a46a" d="M1017 165h5v5h-5zM1050 170h6v5h-6zM860 175h6v5h-6zM1045 175h5v5h-5zM798 185h6v5h-6zM838 185h5v5h-5zM888 185h6v5h-6zM1112 185h6v5h-6zM866 190h5v5h-5zM933 190h5v5h-5zM933 195h5v5h-5zM1017 195h5v5h-5zM888 200h6v5h-6zM1006 200h5v5h-5zM1034 200h5v5h-5zM927 205h6v5h-6zM1000 205h6v5h-6zM1028 205h6v5h-6zM894 210h5v5h-5zM843 215h6v5h-6zM894 215h5v5h-5zM877 220h5v5h-5zM927 220h6v5h-6zM860 225h6v5h-6zM877 225h5v5h-5zM922 225h5v5h-5zM972 225h6v5h-6zM989 225h5v5h-5zM871 240h6v5h-6zM966 245h6v5h-6zM1045 255h5v5h-5zM888 260h6v5h-6zM866 280h5v5h-5zM871 285h6v5h-6zM1000 285h6v5h-6zM798 290h6v5h-6zM810 290h5v5h-5zM815 290h6v5h-6zM854 295h6v5h-6zM882 295h6v5h-6zM966 295h6v5h-6zM1101 295h5v5h-5zM894 300h5v5h-5zM978 300h5v5h-5zM1073 300h5v5h-5zM894 305h5v5h-5zM1101 305h5v5h-5zM866 320h5v5h-5zM871 325h6v5h-6zM1050 325h6v5h-6zM843 330h6v5h-6zM955 345h6v5h-6zM933 350h5v5h-5zM938 355h6v5h-6zM1039 355h6v5h-6zM983 390h6v5h-6z"/><path fill="#2f5038" d="M944 180h6v5h-6zM787 190h6v5h-6zM793 195h5v5h-5zM843 200h6v5h-6zM1011 210h6v5h-6zM1011 215h6v5h-6zM871 220h6v5h-6zM1006 220h5v5h-5zM1000 225h6v5h-6zM916 240h6v5h-6zM961 240h5v5h-5zM955 245h6v5h-6zM933 260h5v5h-5zM1090 270h5v5h-5zM826 275h6v5h-6zM978 275h5v5h-5zM1090 275h5v5h-5zM866 300h5v5h-5zM871 305h6v5h-6zM1000 310h6v5h-6zM938 315h6v5h-6zM843 325h6v5h-6zM849 325h5v5h-5zM1011 330h6v5h-6zM1062 330h5v5h-5zM1017 335h5v5h-5zM989 350h5v5h-5zM961 355h5v5h-5zM866 365h5v5h-5z"/><path fill="#c8a08e" d="M910 245h6v5h-6zM905 255h5v5h-5zM894 260h5v5h-5zM882 270h6v5h-6zM882 295h6v5h-6zM877 300h5v5h-5zM877 310h5v5h-5zM877 320h5v5h-5zM871 340h6v5h-6zM871 345h6v5h-6zM871 345h6v5h-6zM871 365h6v5h-6zM871 375h6v5h-6zM866 380h5v5h-5zM1000 245h6v5h-6zM1011 270h6v5h-6zM1017 270h5v5h-5zM1011 280h6v5h-6zM1017 290h5v5h-5zM1017 305h5v5h-5zM1084 270h6v5h-6zM1078 280h6v5h-6zM1078 300h6v5h-6zM1073 305h5v5h-5zM815 265h6v5h-6zM815 270h6v5h-6zM821 335h5v5h-5zM815 355h6v5h-6zM821 360h5v5h-5zM810 360h5v5h-5zM815 370h6v5h-6zM810 375h5v5h-5zM815 375h6v5h-6zM989 345h5v5h-5zM994 350h6v5h-6zM989 370h5v5h-5zM1067 330h6v5h-6zM1067 340h6v5h-6zM1073 345h5v5h-5zM1078 355h6v5h-6zM1084 370h6v5h-6zM927 300h6v5h-6zM950 265h5v5h-5zM938 265h6v5h-6zM938 190h6v5h-6zM938 190h6v5h-6zM882 160h6v5h-6zM888 160h6v5h-6zM933 160h5v5h-5zM933 160h5v5h-5zM961 155h5v5h-5zM972 155h6v5h-6zM1017 155h5v5h-5zM1034 160h5v5h-5zM815 185h6v5h-6zM815 185h6v5h-6zM821 185h5v5h-5zM832 185h6v5h-6zM832 185h6v5h-6zM843 185h6v5h-6zM854 185h6v5h-6zM866 185h5v5h-5zM1028 185h6v5h-6zM1028 185h6v5h-6zM1039 185h6v5h-6zM1039 185h6v5h-6zM1056 185h6v5h-6zM1062 185h5v5h-5zM1062 190h5v5h-5zM1084 190h6v5h-6zM1045 240h5v5h-5z"/><path fill="#d2ac98" d="M905 245h5v5h-5zM899 255h6v5h-6zM888 260h6v5h-6zM888 260h6v5h-6zM888 270h6v5h-6zM877 280h5v5h-5zM877 285h5v5h-5zM871 315h6v5h-6zM877 330h5v5h-5zM871 340h6v5h-6zM871 350h6v5h-6zM866 355h5v5h-5zM871 360h6v5h-6zM871 365h6v5h-6zM1000 250h6v5h-6zM1000 255h6v5h-6zM1000 255h6v5h-6zM1011 265h6v5h-6zM1017 285h5v5h-5zM1017 300h5v5h-5zM1084 260h6v5h-6zM1084 265h6v5h-6zM1078 275h6v5h-6zM1073 280h5v5h-5zM1073 285h5v5h-5zM1073 295h5v5h-5zM1073 310h5v5h-5zM810 270h5v5h-5zM815 280h6v5h-6zM815 300h6v5h-6zM815 305h6v5h-6zM821 305h5v5h-5zM826 310h6v5h-6zM810 365h5v5h-5zM810 370h5v5h-5zM989 355h5v5h-5zM989 360h5v5h-5zM989 380h5v5h-5zM994 380h6v5h-6zM1073 345h5v5h-5zM1078 350h6v5h-6zM1084 355h6v5h-6zM1090 375h5v5h-5zM927 300h6v5h-6zM933 300h5v5h-5zM933 295h5v5h-5zM944 295h6v5h-6zM955 270h6v5h-6zM938 190h6v5h-6zM888 160h6v5h-6zM922 160h5v5h-5zM927 160h6v5h-6zM961 155h5v5h-5zM1011 155h6v5h-6zM1028 160h6v5h-6zM1034 160h5v5h-5zM1039 160h6v5h-6zM810 185h5v5h-5zM821 185h5v5h-5zM832 185h6v5h-6zM849 185h5v5h-5zM854 185h6v5h-6zM860 185h6v5h-6zM1028 185h6v5h-6zM1039 185h6v5h-6zM1067 190h6v5h-6z"/><path fill="#c49c88" d="M910 245h6v5h-6zM905 250h5v5h-5zM882 270h6v5h-6zM882 280h6v5h-6zM877 280h5v5h-5zM877 290h5v5h-5zM877 295h5v5h-5zM877 295h5v5h-5zM871 300h6v5h-6zM877 305h5v5h-5zM877 315h5v5h-5zM871 325h6v5h-6zM877 325h5v5h-5zM871 325h6v5h-6zM871 330h6v5h-6zM877 345h5v5h-5zM877 345h5v5h-5zM866 375h5v5h-5zM866 375h5v5h-5zM871 380h6v5h-6zM989 240h5v5h-5zM1006 250h5v5h-5zM1006 255h5v5h-5zM1000 255h6v5h-6zM1006 260h5v5h-5zM1011 260h6v5h-6zM1006 265h5v5h-5zM1006 270h5v5h-5zM1011 275h6v5h-6zM1017 290h5v5h-5zM1017 295h5v5h-5zM1022 295h6v5h-6zM1084 265h6v5h-6zM1078 265h6v5h-6zM1078 270h6v5h-6zM1084 275h6v5h-6zM1078 285h6v5h-6zM1073 285h5v5h-5zM1073 290h5v5h-5zM1073 305h5v5h-5zM821 260h5v5h-5zM821 260h5v5h-5zM815 265h6v5h-6zM815 270h6v5h-6zM810 270h5v5h-5zM821 295h5v5h-5zM815 300h6v5h-6zM821 310h5v5h-5zM826 315h6v5h-6zM815 350h6v5h-6zM815 360h6v5h-6zM989 365h5v5h-5zM994 365h6v5h-6zM1073 340h5v5h-5zM1078 350h6v5h-6zM1090 375h5v5h-5zM1090 380h5v5h-5zM938 295h6v5h-6zM955 270h6v5h-6zM944 265h6v5h-6zM927 185h6v5h-6zM933 185h5v5h-5zM922 160h5v5h-5zM966 155h6v5h-6zM1011 155h6v5h-6zM1017 155h5v5h-5zM1039 160h6v5h-6zM810 185h5v5h-5zM810 185h5v5h-5zM843 185h6v5h-6zM1045 185h5v5h-5zM1050 185h6v5h-6zM1056 185h6v5h-6zM1067 190h6v5h-6zM1067 190h6v5h-6zM1045 240h5v5h-5zM1056 245h6v5h-6z"/><path fill="#b08c78" d="M899 250h6v5h-6zM894 255h5v5h-5zM894 260h5v5h-5zM894 260h5v5h-5zM894 265h5v5h-5zM894 265h5v5h-5zM882 290h6v5h-6zM871 300h6v5h-6zM871 305h6v5h-6zM871 305h6v5h-6zM871 310h6v5h-6zM871 315h6v5h-6zM877 335h5v5h-5zM866 360h5v5h-5zM1000 240h6v5h-6zM994 245h6v5h-6zM1006 255h5v5h-5zM1011 270h6v5h-6zM1017 280h5v5h-5zM1017 290h5v5h-5zM1022 290h6v5h-6zM1022 290h6v5h-6zM1022 300h6v5h-6zM1078 270h6v5h-6zM1078 280h6v5h-6zM1078 295h6v5h-6zM1073 300h5v5h-5zM1073 300h5v5h-5zM821 265h5v5h-5zM821 275h5v5h-5zM815 285h6v5h-6zM815 295h6v5h-6zM815 295h6v5h-6zM815 305h6v5h-6zM821 310h5v5h-5zM821 330h5v5h-5zM815 350h6v5h-6zM821 350h5v5h-5zM983 345h6v5h-6zM989 355h5v5h-5zM1062 330h5v5h-5zM1073 335h5v5h-5zM1084 365h6v5h-6zM1084 365h6v5h-6zM1090 365h5v5h-5zM933 295h5v5h-5zM944 295h6v5h-6zM961 270h5v5h-5zM944 265h6v5h-6zM927 185h6v5h-6zM871 160h6v5h-6zM882 160h6v5h-6zM888 160h6v5h-6zM938 160h6v5h-6zM955 155h6v5h-6zM966 155h6v5h-6zM966 155h6v5h-6zM1017 155h5v5h-5zM1022 160h6v5h-6zM1034 160h5v5h-5zM826 185h6v5h-6zM838 185h5v5h-5zM843 185h6v5h-6zM860 185h6v5h-6zM1073 190h5v5h-5zM1039 240h6v5h-6zM1045 240h5v5h-5zM1050 240h6v5h-6zM1050 245h6v5h-6zM1056 245h6v5h-6z"/><path fill="#a07a66" d="M899 250h6v5h-6zM882 275h6v5h-6zM882 285h6v5h-6zM882 285h6v5h-6zM871 310h6v5h-6zM871 320h6v5h-6zM871 330h6v5h-6zM871 340h6v5h-6zM866 355h5v5h-5zM871 355h6v5h-6zM871 370h6v5h-6zM866 380h5v5h-5zM871 380h6v5h-6zM1017 275h5v5h-5zM1017 280h5v5h-5zM1017 300h5v5h-5zM1078 285h6v5h-6zM1073 290h5v5h-5zM1078 300h6v5h-6zM1078 305h6v5h-6zM1073 310h5v5h-5zM826 260h6v5h-6zM826 260h6v5h-6zM815 270h6v5h-6zM815 275h6v5h-6zM815 280h6v5h-6zM821 285h5v5h-5zM815 290h6v5h-6zM821 305h5v5h-5zM821 315h5v5h-5zM826 315h6v5h-6zM826 330h6v5h-6zM826 335h6v5h-6zM821 340h5v5h-5zM815 345h6v5h-6zM821 345h5v5h-5zM815 345h6v5h-6zM821 345h5v5h-5zM821 355h5v5h-5zM815 370h6v5h-6zM989 350h5v5h-5zM994 355h6v5h-6zM994 365h6v5h-6zM989 375h5v5h-5zM994 375h6v5h-6zM1073 345h5v5h-5zM1084 355h6v5h-6zM1084 360h6v5h-6zM1084 360h6v5h-6zM1090 370h5v5h-5zM1090 380h5v5h-5zM950 270h5v5h-5zM933 190h5v5h-5zM877 160h5v5h-5zM927 160h6v5h-6zM1028 160h6v5h-6zM1039 160h6v5h-6zM804 185h6v5h-6zM826 185h6v5h-6zM838 185h5v5h-5zM838 185h5v5h-5zM854 185h6v5h-6zM1022 185h6v5h-6zM1045 185h5v5h-5zM1045 185h5v5h-5zM1050 185h6v5h-6zM1050 185h6v5h-6zM1062 190h5v5h-5zM1062 190h5v5h-5zM1073 190h5v5h-5zM1078 190h6v5h-6zM1050 240h6v5h-6zM1056 245h6v5h-6z"/><path fill="#1f2a1c" d="M977 190h48v3h-48z"/><path fill="#b5aa72" d="M862 211h22v10h-22zM887 211h7v10h-7zM901 211h18v10h-18zM950 211h13v10h-13zM994 211h19v10h-19zM1013 200h31v5h-31zM1031 176h29v5h-29z"/><polygon points="933.7,331 931.5,356 929.3,372 927.1,400 924.6,425 920.8,450 919.5,475 917,500 913.1,525 909.3,550 904.2,575 899.1,600 892.7,625 888.5,645 884.4,670 879.8,700 876.8,730 874.5,760 875.3,773 885,777 900,777.5 915,775 916.5,760 917.3,730 918.8,700 921,670 924.5,645 928.4,625 929.7,600 932.2,575 934.8,550 938.6,525 941.1,500 942.4,475 946.2,450 948.8,425 947.5,400 948.3,372 952.8,360 951.7,331" fill="#a88a76"/><path fill="#7d614f" d="M932 331h5v5h-5zM937 347h6v5h-6zM943 347h5v5h-5zM937 378h6v5h-6zM932 383h5v5h-5zM943 393h5v6h-5zM937 404h6v5h-6zM926 409h6v5h-6zM943 409h5v5h-5zM943 425h5v5h-5zM926 440h6v5h-6zM943 440h5v5h-5zM932 445h5v6h-5zM937 451h6v5h-6zM920 456h6v5h-6zM937 456h6v5h-6zM932 471h5v6h-5zM937 471h6v6h-6zM920 477h6v5h-6zM920 503h6v5h-6zM937 503h6v5h-6zM926 508h6v5h-6zM920 518h6v5h-6zM926 518h6v5h-6zM920 534h6v5h-6zM932 544h5v5h-5zM915 549h5v6h-5zM926 575h6v6h-6zM909 596h6v5h-6zM915 596h5v5h-5zM926 596h6v5h-6zM904 612h5v5h-5zM926 612h6v5h-6zM892 627h6v6h-6zM904 627h5v6h-5zM909 633h6v5h-6zM887 648h5v5h-5zM892 653h6v6h-6zM915 653h5v6h-5zM892 659h6v5h-6zM898 664h6v5h-6zM887 674h5v5h-5zM892 690h6v5h-6zM909 690h6v5h-6zM915 705h5v6h-5zM915 711h5v5h-5zM881 721h6v5h-6zM887 721h5v5h-5zM915 721h5v5h-5zM909 737h6v5h-6zM892 752h6v5h-6zM898 752h6v5h-6zM909 752h6v5h-6z"/><path fill="#b39480" d="M937 331h6v5h-6zM932 336h5v5h-5zM932 341h5v6h-5zM948 341h6v6h-6zM932 347h5v5h-5zM937 352h6v5h-6zM943 357h5v5h-5zM943 362h5v5h-5zM943 373h5v5h-5zM932 378h5v5h-5zM926 383h6v5h-6zM943 388h5v5h-5zM932 399h5v5h-5zM937 399h6v5h-6zM943 404h5v5h-5zM926 445h6v6h-6zM926 456h6v5h-6zM932 456h5v5h-5zM932 461h5v5h-5zM937 461h6v5h-6zM932 466h5v5h-5zM937 466h6v5h-6zM926 477h6v5h-6zM932 477h5v5h-5zM926 482h6v5h-6zM915 492h5v5h-5zM932 492h5v5h-5zM920 508h6v5h-6zM937 508h6v5h-6zM932 513h5v5h-5zM915 523h5v6h-5zM926 523h6v6h-6zM915 539h5v5h-5zM909 575h6v6h-6zM920 586h6v5h-6zM898 591h6v5h-6zM909 591h6v5h-6zM915 601h5v6h-5zM892 617h6v5h-6zM898 617h6v5h-6zM920 627h6v6h-6zM898 633h6v5h-6zM892 638h6v5h-6zM915 648h5v5h-5zM920 648h6v5h-6zM904 653h5v6h-5zM892 664h6v5h-6zM909 664h6v5h-6zM898 669h6v5h-6zM904 669h5v5h-5zM887 679h5v6h-5zM915 679h5v6h-5zM881 685h6v5h-6zM909 685h6v5h-6zM887 690h5v5h-5zM881 695h6v5h-6zM898 695h6v5h-6zM909 695h6v5h-6zM881 700h6v5h-6zM915 700h5v5h-5zM892 711h6v5h-6zM887 726h5v5h-5zM898 731h6v6h-6zM904 731h5v6h-5zM876 742h5v5h-5zM887 742h5v5h-5zM892 742h6v5h-6zM876 757h5v6h-5zM898 757h6v6h-6zM881 763h6v5h-6z"/><path fill="#9a7a67" d="M943 331h5v5h-5zM948 331h6v5h-6zM937 336h6v5h-6zM948 347h6v5h-6zM932 362h5v5h-5zM937 373h6v5h-6zM932 393h5v6h-5zM943 414h5v5h-5zM920 435h6v5h-6zM937 435h6v5h-6zM920 445h6v6h-6zM926 451h6v5h-6zM943 451h5v5h-5zM926 466h6v5h-6zM915 513h5v5h-5zM920 513h6v5h-6zM909 534h6v5h-6zM932 539h5v5h-5zM909 549h6v6h-6zM932 549h5v6h-5zM904 565h5v5h-5zM915 565h5v5h-5zM915 570h5v5h-5zM909 581h6v5h-6zM915 581h5v5h-5zM909 607h6v5h-6zM915 612h5v5h-5zM892 633h6v5h-6zM898 643h6v5h-6zM909 659h6v5h-6zM915 669h5v5h-5zM881 674h6v5h-6zM904 674h5v5h-5zM909 674h6v5h-6zM915 674h5v5h-5zM898 679h6v6h-6zM881 690h6v5h-6zM892 695h6v5h-6zM904 695h5v5h-5zM915 695h5v5h-5zM887 705h5v6h-5zM904 705h5v6h-5zM909 705h6v6h-6zM881 711h6v5h-6zM898 716h6v5h-6zM909 716h6v5h-6zM876 721h5v5h-5zM898 721h6v5h-6zM881 726h6v5h-6zM881 731h6v6h-6zM887 737h5v5h-5zM892 737h6v5h-6zM904 737h5v5h-5zM898 747h6v5h-6zM881 752h6v5h-6zM887 752h5v5h-5zM892 768h6v5h-6zM909 768h6v5h-6zM887 773h5v5h-5z"/><path fill="#bea08c" d="M943 336h5v5h-5zM943 352h5v5h-5zM932 373h5v5h-5zM937 383h6v5h-6zM926 393h6v6h-6zM926 404h6v5h-6zM932 404h5v5h-5zM926 414h6v5h-6zM932 414h5v5h-5zM926 430h6v5h-6zM943 430h5v5h-5zM937 445h6v6h-6zM920 451h6v5h-6zM920 461h6v5h-6zM920 482h6v5h-6zM920 487h6v5h-6zM937 492h6v5h-6zM920 497h6v6h-6zM932 497h5v6h-5zM937 497h6v6h-6zM915 503h5v5h-5zM920 529h6v5h-6zM926 529h6v5h-6zM926 534h6v5h-6zM926 539h6v5h-6zM915 544h5v5h-5zM920 544h6v5h-6zM915 555h5v5h-5zM904 570h5v5h-5zM920 575h6v6h-6zM904 586h5v5h-5zM909 586h6v5h-6zM915 591h5v5h-5zM920 591h6v5h-6zM904 596h5v5h-5zM898 601h6v6h-6zM904 601h5v6h-5zM926 601h6v6h-6zM915 607h5v5h-5zM926 607h6v5h-6zM915 617h5v5h-5zM909 627h6v6h-6zM920 633h6v5h-6zM898 638h6v5h-6zM915 638h5v5h-5zM892 643h6v5h-6zM909 648h6v5h-6zM887 659h5v5h-5zM887 664h5v5h-5zM904 664h5v5h-5zM892 669h6v5h-6zM881 679h6v6h-6zM915 685h5v5h-5zM887 695h5v5h-5zM904 700h5v5h-5zM909 700h6v5h-6zM892 705h6v6h-6zM909 711h6v5h-6zM876 716h5v5h-5zM881 716h6v5h-6zM887 716h5v5h-5zM892 716h6v5h-6zM915 716h5v5h-5zM892 721h6v5h-6zM909 721h6v5h-6zM909 726h6v5h-6zM876 731h5v6h-5zM898 737h6v5h-6zM881 747h6v5h-6zM909 757h6v6h-6zM892 773h6v5h-6zM898 773h6v5h-6zM904 773h5v5h-5z"/><path fill="#aa8b78" d="M948 336h6v5h-6zM948 352h6v5h-6zM932 357h5v5h-5zM948 357h6v5h-6zM937 362h6v5h-6zM943 367h5v6h-5zM926 378h6v5h-6zM943 383h5v5h-5zM926 388h6v5h-6zM926 399h6v5h-6zM932 409h5v5h-5zM926 419h6v6h-6zM943 419h5v6h-5zM926 425h6v5h-6zM937 425h6v5h-6zM920 440h6v5h-6zM937 440h6v5h-6zM932 451h5v5h-5zM926 461h6v5h-6zM926 471h6v6h-6zM937 477h6v5h-6zM937 482h6v5h-6zM920 492h6v5h-6zM926 497h6v6h-6zM915 508h5v5h-5zM932 508h5v5h-5zM926 513h6v5h-6zM920 523h6v6h-6zM932 523h5v6h-5zM915 529h5v5h-5zM932 534h5v5h-5zM909 539h6v5h-6zM920 539h6v5h-6zM909 544h6v5h-6zM926 544h6v5h-6zM926 549h6v6h-6zM909 555h6v5h-6zM920 555h6v5h-6zM926 555h6v5h-6zM915 560h5v5h-5zM920 560h6v5h-6zM926 560h6v5h-6zM904 575h5v6h-5zM915 575h5v6h-5zM904 581h5v5h-5zM920 581h6v5h-6zM926 581h6v5h-6zM915 586h5v5h-5zM904 591h5v5h-5zM898 596h6v5h-6zM920 596h6v5h-6zM920 607h6v5h-6zM920 612h6v5h-6zM920 617h6v5h-6zM898 622h6v5h-6zM909 622h6v5h-6zM915 622h5v5h-5zM915 627h5v6h-5zM915 633h5v5h-5zM920 638h6v5h-6zM898 648h6v5h-6zM904 648h5v5h-5zM898 653h6v6h-6zM898 659h6v5h-6zM915 659h5v5h-5zM887 669h5v5h-5zM909 669h6v5h-6zM887 700h5v5h-5zM892 700h6v5h-6zM898 700h6v5h-6zM881 705h6v6h-6zM898 705h6v6h-6zM904 716h5v5h-5zM876 726h5v5h-5zM904 726h5v5h-5zM887 731h5v6h-5zM892 731h6v6h-6zM909 731h6v6h-6zM876 737h5v5h-5zM881 742h6v5h-6zM904 742h5v5h-5zM909 742h6v5h-6zM876 747h5v5h-5zM892 747h6v5h-6zM904 747h5v5h-5zM881 757h6v6h-6zM892 757h6v6h-6zM887 763h5v5h-5zM898 763h6v5h-6zM909 763h6v5h-6zM876 768h5v5h-5zM898 768h6v5h-6zM881 773h6v5h-6z"/><path fill="#ceb29e" d="M937 341h6v6h-6zM943 341h5v6h-5zM932 352h5v5h-5zM937 357h6v5h-6zM937 367h6v6h-6zM932 388h5v5h-5zM937 388h6v5h-6zM943 399h5v5h-5zM937 414h6v5h-6zM932 419h5v6h-5zM932 430h5v5h-5zM937 430h6v5h-6zM926 435h6v5h-6zM932 435h5v5h-5zM943 435h5v5h-5zM943 445h5v6h-5zM932 482h5v5h-5zM926 492h6v5h-6zM915 497h5v6h-5zM932 529h5v5h-5zM909 560h6v5h-6zM909 570h6v5h-6zM920 570h6v5h-6zM926 570h6v5h-6zM926 591h6v5h-6zM920 601h6v6h-6zM898 607h6v5h-6zM904 607h5v5h-5zM909 612h6v5h-6zM904 617h5v5h-5zM909 617h6v5h-6zM892 622h6v5h-6zM904 622h5v5h-5zM904 633h5v5h-5zM904 638h5v5h-5zM909 638h6v5h-6zM892 648h6v5h-6zM887 653h5v6h-5zM909 653h6v6h-6zM915 664h5v5h-5zM892 674h6v5h-6zM892 679h6v6h-6zM909 679h6v6h-6zM887 685h5v5h-5zM892 685h6v5h-6zM898 685h6v5h-6zM904 685h5v5h-5zM887 711h5v5h-5zM904 711h5v5h-5zM892 726h6v5h-6zM898 726h6v5h-6zM898 742h6v5h-6zM887 747h5v5h-5zM909 747h6v5h-6zM904 757h5v6h-5zM876 763h5v5h-5zM892 763h6v5h-6zM904 763h5v5h-5z"/><path fill="#6c5141" d="M932 367h5v6h-5zM943 378h5v5h-5zM937 393h6v6h-6zM937 409h6v5h-6zM937 419h6v6h-6zM932 425h5v5h-5zM932 440h5v5h-5zM920 466h6v5h-6zM920 471h6v6h-6zM926 487h6v5h-6zM932 487h5v5h-5zM937 487h6v5h-6zM926 503h6v5h-6zM932 503h5v5h-5zM915 518h5v5h-5zM932 518h5v5h-5zM915 534h5v5h-5zM920 549h6v6h-6zM909 565h6v5h-6zM920 565h6v5h-6zM926 565h6v5h-6zM926 586h6v5h-6zM909 601h6v6h-6zM898 612h6v5h-6zM920 622h6v5h-6zM898 627h6v6h-6zM887 638h5v5h-5zM887 643h5v5h-5zM904 643h5v5h-5zM909 643h6v5h-6zM915 643h5v5h-5zM920 643h6v5h-6zM904 659h5v5h-5zM898 674h6v5h-6zM904 679h5v6h-5zM898 690h6v5h-6zM904 690h5v5h-5zM915 690h5v5h-5zM898 711h6v5h-6zM904 721h5v5h-5zM881 737h6v5h-6zM876 752h5v5h-5zM904 752h5v5h-5zM887 757h5v6h-5zM881 768h6v5h-6zM887 768h5v5h-5zM904 768h5v5h-5z"/></g><polygon points="1494.2,809.9 1584.7,809.2 1581.1,865.5 1557.9,893.3 1499.2,874.8" fill="#3c3b3f" opacity="0.93"/><path d="M1494.2,809.9 L1560.4,813.1 M1560.4,813.1 L1557.9,893.3 M1560.4,813.1 L1584.7,809.2 M1584.7,809.2 L1581.1,865.5 M1557.9,893.3 L1581.1,865.5 M1533.4,857.0 L1581.1,865.5 M1532.7,810.4 L1533.4,857.0 M1494.2,809.9 L1532.7,810.4 M1532.7,810.4 L1584.7,809.2" stroke="#d8d8d8" stroke-width="1.4" fill="none"/><path d="M1494.2,809.9 L1499.2,874.8" stroke="#3a8fd8" stroke-width="1.6"/><path d="M1499.2,874.8 L1557.9,893.3" stroke="#e02020" stroke-width="1.8"/><path d="M1499.2,874.8 L1533.4,857.0" stroke="#8aa040" stroke-width="1.4"/></svg>
</body></html>
